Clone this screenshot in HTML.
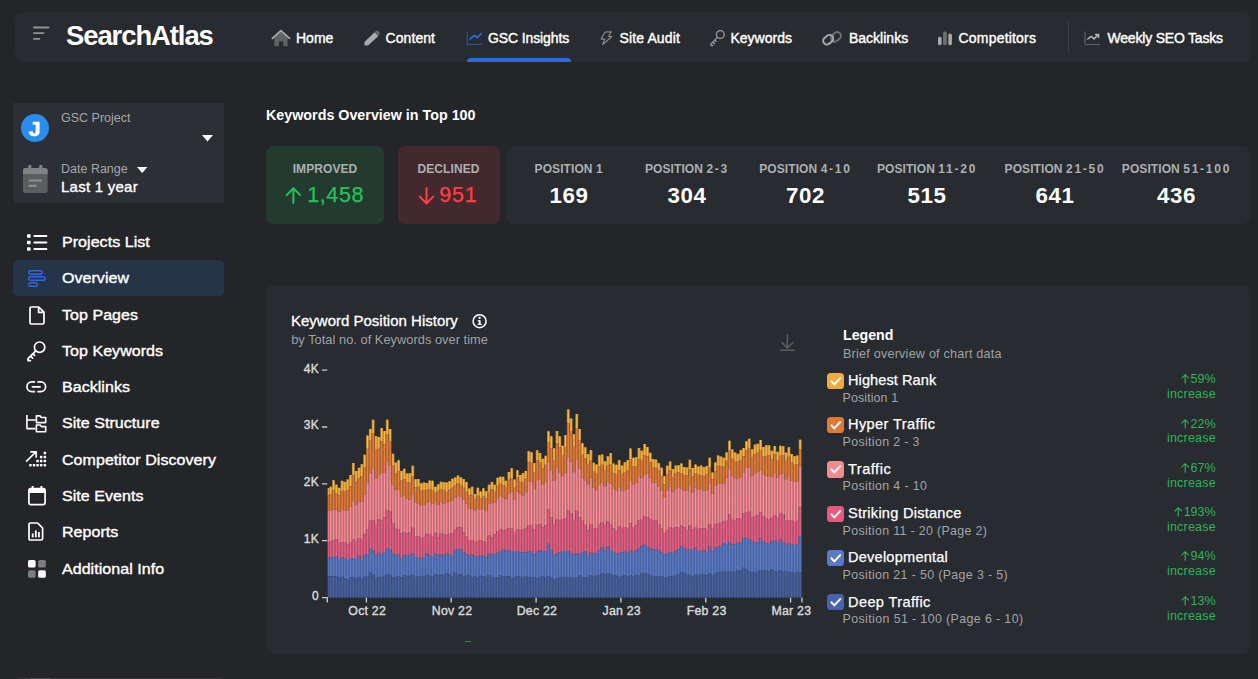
<!DOCTYPE html>
<html>
<head>
<meta charset="utf-8">
<title>SearchAtlas</title>
<style>
*{box-sizing:border-box;margin:0;padding:0}
html,body{width:1258px;height:679px;overflow:hidden;background:#242528;font-family:"Liberation Sans",sans-serif;color:#fff}
.abs{position:absolute}
.t{position:absolute;white-space:nowrap;line-height:1}
#nav{position:absolute;left:15px;top:12px;width:1236px;height:50px;background:#282b2f;border-radius:8px}
.ni{font-size:14px;color:#fff;-webkit-text-stroke:0.4px #fff;top:31.4px}
.logo{font-size:27.4px;font-weight:bold;color:#fff;left:66px;top:21.5px;letter-spacing:-1.05px}
svg{position:absolute;overflow:visible}
.mi{letter-spacing:0.05px;font-size:16px;color:#fff;-webkit-text-stroke:0.4px #fff;left:62px;transform:scaleY(0.93);transform-origin:0 84.6%}
.lab{letter-spacing:0.08px;font-size:12px;font-weight:bold;color:#adb0b2;text-align:center;transform:translateX(-50%)}
.val{font-size:22.3px;font-weight:bold;color:#fff;text-align:center;transform:translateX(-50%);letter-spacing:0.6px}
.ln{left:848px;font-size:14.6px;color:#fff;-webkit-text-stroke:0.25px #fff}
.ls{left:842.6px;font-size:12.4px;color:#a3a5a8}
.lp{right:42.4px;font-size:12.5px;color:#2fb457;text-align:right}
.lp.inc{letter-spacing:0.2px;right:42.2px}
.ax{font-size:12.3px;letter-spacing:0.25px;color:#d8d9da;-webkit-text-stroke:0.4px #d8d9da}
</style>
</head>
<body>
<!-- NAVBAR -->
<div id="nav"></div>
<svg style="left:33px;top:26px" width="17" height="14" viewBox="0 0 17 14"><g stroke="#8f9193" stroke-width="1.8" stroke-linecap="round"><path d="M0.9 1.5H15.5M0.9 7.1H10.6M0.9 12.8H6.4"/></g></svg>
<div class="t logo">SearchAtlas</div>

<div class="t ni" style="left:296px">Home</div>
<div class="t ni" style="left:385.5px;letter-spacing:0.08px">Content</div>
<div class="t ni" style="left:488px;letter-spacing:-0.12px">GSC Insights</div>
<div class="t ni" style="left:619.5px;letter-spacing:0.13px">Site Audit</div>
<div class="t ni" style="left:730.5px">Keywords</div>
<div class="t ni" style="left:849px">Backlinks</div>
<div class="t ni" style="left:958.5px;letter-spacing:0.2px">Competitors</div>
<div class="t ni" style="left:1107.5px;letter-spacing:-0.2px">Weekly SEO Tasks</div>
<div class="abs" style="left:467px;top:58px;width:103.5px;height:4px;background:#2d6bdc;border-radius:4px 4px 0 0"></div>
<div class="abs" style="left:1067.5px;top:22px;width:1px;height:30px;background:#3b3e43"></div>


<!-- nav icons -->
<svg style="left:271px;top:29px" width="20" height="18" viewBox="271 29 20 18"><path d="M274.2 37.2L280.9 31.2L287.6 37.2V46.3H283.2V41.5H279.1V46.3H274.2Z" fill="#5f6163"/><path d="M272.4 38.4L280.9 30.7L289.6 38.4" fill="none" stroke="#a9abad" stroke-width="1.7" stroke-linecap="round" stroke-linejoin="round"/></svg>
<svg style="left:362px;top:29px" width="20" height="18" viewBox="362 29 20 18"><path d="M364 45.8L364.9 41.6L374.6 32.2L378.4 35.9L368.4 45.2Z" fill="#a8aaac"/><path d="M374.9 31.9L376 30.9Q377 30.1 378 31L379.4 32.4Q380.2 33.4 379.4 34.4L378.6 35.4Z" fill="#6a6c6e"/><path d="M364 45.8L364.4 44L365.9 45.4Z" fill="#3a3c3e"/></svg>
<svg style="left:466px;top:30px" width="18" height="16" viewBox="466 30 18 16"><path d="M467.3 31.6V44.4H482.2" fill="none" stroke="#2a4f9a" stroke-width="1.3"/><path d="M470.2 39L474.6 35.2L476.9 37.8L481.2 33.6" fill="none" stroke="#2d6bdc" stroke-width="1.7" stroke-linejoin="round" stroke-linecap="round"/></svg>
<svg style="left:599px;top:30px" width="15" height="16" viewBox="599 30 15 16"><path d="M605 32.1L611.3 31.7L608.6 36.5H611.9L602.7 44.5L604.8 39.1H601.2Z" fill="none" stroke="#8b8d8f" stroke-width="1.1" stroke-linejoin="round"/></svg>
<svg style="left:708px;top:29px" width="18" height="18" viewBox="708 29 18 18"><g fill="none" stroke="#9b9d9f" stroke-width="1.3" stroke-linecap="round" stroke-linejoin="round"><circle cx="720.3" cy="34.5" r="3.9"/><path d="M717.5 37.4L711 43.9V45.5H712.8M713 42.2L714.5 43.7M715 40.2L716.2 41.4"/></g></svg>
<svg style="left:821px;top:29px" width="22" height="18" viewBox="821 29 22 18"><g fill="none" stroke-width="2"><rect x="830.5" y="33.2" width="10.8" height="7.4" rx="3.7" transform="rotate(-40 835.9 36.9)" stroke="#6e7072"/><rect x="822.8" y="36" width="10.8" height="7.4" rx="3.7" transform="rotate(-40 828.2 39.7)" stroke="#a8aaac"/></g></svg>
<svg style="left:937px;top:30px" width="16" height="16" viewBox="937 30 16 16"><rect x="938" y="36.8" width="3.6" height="8.4" rx="1.6" fill="#a8aaac"/><rect x="943.1" y="31.5" width="3.7" height="13.7" rx="1.6" fill="#6e7072"/><rect x="948.3" y="33.5" width="3.6" height="11.7" rx="1.6" fill="#a8aaac"/></svg>
<svg style="left:1084px;top:30px" width="18" height="16" viewBox="1084 30 18 16"><path d="M1085 31.6V43.2Q1085 44.5 1086.3 44.5H1100" fill="none" stroke="#5f6163" stroke-width="1.2"/><path d="M1087.8 39L1091.2 36.3L1094 38.9L1098.2 34.8M1095.6 34.5H1098.6V37.5" fill="none" stroke="#b5b7b9" stroke-width="1.5" stroke-linejoin="round" stroke-linecap="round"/></svg>

<!-- SIDEBAR -->
<div class="abs" style="left:13px;top:103px;width:211px;height:100px;background:#2c2f33"></div>
<div class="abs" style="left:13px;top:260px;width:211px;height:36px;background:#253449;border-radius:5px"></div>

<div class="t mi" style="top:234.3px">Projects List</div>
<div class="t mi" style="top:270.3px">Overview</div>
<div class="t mi" style="top:307.3px">Top Pages</div>
<div class="t mi" style="top:343.3px">Top Keywords</div>
<div class="t mi" style="top:379.3px">Backlinks</div>
<div class="t mi" style="top:415.3px">Site Structure</div>
<div class="t mi" style="top:452.3px">Competitor Discovery</div>
<div class="t mi" style="top:488.3px">Site Events</div>
<div class="t mi" style="top:524.3px">Reports</div>
<div class="t mi" style="top:561.3px">Additional Info</div>


<!-- project card contents -->
<div class="abs" style="left:20.8px;top:113.7px;width:28.6px;height:28.6px;border-radius:50%;background:#2a8cec"></div>
<div class="t" style="left:28.8px;top:117.8px;font-size:21px;font-weight:bold;color:#fff;-webkit-text-stroke:0.7px #fff">J</div>
<div class="t" style="left:61px;top:111.9px;font-size:12.5px;color:#a6a8aa">GSC Project</div>
<svg style="left:202px;top:135px" width="11" height="6.4" viewBox="0 0 11 6.4"><path d="M0 0H11L5.5 6.4Z" fill="#fff"/></svg>
<svg style="left:23px;top:164.5px" width="24.6" height="28" viewBox="0 0 24.6 28">
<rect x="0" y="3" width="24.6" height="25" rx="2.6" fill="#5b5d5f"/>
<path d="M0 9V5.6Q0 3 2.6 3H22Q24.6 3 24.6 5.6V9Z" fill="#808284"/>
<rect x="5.2" y="0" width="3.2" height="5" rx="1" fill="#808284"/><rect x="16.2" y="0" width="3.2" height="5" rx="1" fill="#808284"/>
<rect x="5.5" y="14.4" width="13.6" height="2.2" rx="1" fill="#8b8d8f"/><rect x="5.5" y="19.8" width="8.2" height="2.2" rx="1" fill="#8b8d8f"/>
</svg>
<div class="t" style="left:61px;top:163.2px;font-size:12.5px;color:#a6a8aa;letter-spacing:0px">Date Range</div>
<svg style="left:136.8px;top:167px" width="10.4" height="5.9" viewBox="0 0 10.4 5.9"><path d="M0 0H10.4L5.2 5.9Z" fill="#fff"/></svg>
<div class="t" style="left:61px;top:178.8px;font-size:15px;color:#fff;-webkit-text-stroke:0.35px #fff;letter-spacing:0.25px">Last 1 year</div>

<!-- sidebar icons -->
<!-- projects list -->
<svg style="left:26.5px;top:233.5px" width="20.5" height="17" viewBox="0 0 20.5 17"><g fill="#fff"><rect x="0" y="0.3" width="3.6" height="3.4" rx="0.7"/><rect x="0" y="6.8" width="3.6" height="3.4" rx="0.7"/><rect x="0" y="13.3" width="3.6" height="3.4" rx="0.7"/><rect x="6.4" y="1" width="14" height="2" rx="1"/><rect x="6.4" y="7.5" width="14" height="2" rx="1"/><rect x="6.4" y="14" width="14" height="2" rx="1"/></g></svg>
<!-- overview -->
<svg style="left:27.5px;top:269.5px" width="18" height="17" viewBox="0 0 18 17"><g fill="none" stroke="#2d6bdc" stroke-width="1.4"><rect x="0.7" y="0.7" width="13.4" height="3.6" rx="1.8"/><rect x="0.7" y="6.7" width="16.4" height="3.6" rx="1.8"/><rect x="0.7" y="12.7" width="8.6" height="3.6" rx="1.8"/></g></svg>
<!-- top pages -->
<svg style="left:28.5px;top:305.5px" width="16" height="19" viewBox="0 0 16 19"><path d="M2.6 1H9.8L15 6.2V16.4Q15 18 13.4 18H2.6Q1 18 1 16.4V2.6Q1 1 2.6 1ZM9.6 1.2V6.4H14.8" fill="none" stroke="#fff" stroke-width="1.7" stroke-linejoin="round"/></svg>
<!-- top keywords key -->
<svg style="left:27px;top:340.5px" width="19" height="20.5" viewBox="0 0 19 20.5"><g fill="none" stroke="#fff" stroke-width="1.7" stroke-linecap="round" stroke-linejoin="round"><circle cx="12.6" cy="6.2" r="5.2"/><path d="M8.8 9.8L1 17.6V19.6H3.4M3.6 15.2L5.6 17.2M6 12.8L7.6 14.4"/></g></svg>
<!-- backlinks -->
<svg style="left:26px;top:381px" width="20.5" height="11.6" viewBox="0 0 20.5 11.6"><g fill="none" stroke="#fff" stroke-width="1.7" stroke-linecap="round"><path d="M8.4 0.9H5.8A4.9 4.9 0 0 0 5.8 10.7H8.4M12.1 0.9H14.7A4.9 4.9 0 0 1 14.7 10.7H12.1M6.4 5.8H14.1"/></g></svg>
<!-- site structure -->
<svg style="left:26px;top:414.5px" width="20.5" height="17.5" viewBox="0 0 20.5 17.5"><g fill="none" stroke="#fff" stroke-width="1.6" stroke-linejoin="round"><path d="M0.9 0V13.6H9.6M0.9 5H9.6"/><path d="M10.4 0.9H14.2L15.4 2.5H19.7V7.6H10.4Z"/><path d="M10.4 10H14.2L15.4 11.6H19.7V16.7H10.4Z"/></g></svg>
<!-- competitor discovery -->
<svg style="left:26px;top:451px" width="20.5" height="17.5" viewBox="0 0 20.5 17.5"><g fill="none" stroke="#fff" stroke-width="1.7" stroke-linecap="round" stroke-linejoin="round"><path d="M0.6 10.2L9.8 1M5 0.8H10.2V6"/></g><g fill="#fff"><rect x="17.6" y="0.8" width="2.5" height="2.5" rx="0.6"/><rect x="13.9" y="4.8" width="2.5" height="2.5" rx="0.6"/><rect x="17.6" y="4.8" width="2.5" height="2.5" rx="0.6"/><rect x="10.3" y="8.8" width="2.5" height="2.5" rx="0.6"/><rect x="13.9" y="8.8" width="2.5" height="2.5" rx="0.6"/><rect x="17.6" y="8.8" width="2.5" height="2.5" rx="0.6"/><rect x="3.2" y="12.9" width="2.5" height="2.5" rx="0.6"/><rect x="6.8" y="12.9" width="2.5" height="2.5" rx="0.6"/><rect x="10.3" y="12.9" width="2.5" height="2.5" rx="0.6"/><rect x="13.9" y="12.9" width="2.5" height="2.5" rx="0.6"/><rect x="17.6" y="12.9" width="2.5" height="2.5" rx="0.6"/></g></svg>
<!-- site events -->
<svg style="left:27.5px;top:486px" width="18" height="19.5" viewBox="0 0 18 19.5"><g fill="none" stroke="#fff" stroke-width="1.7" stroke-linejoin="round"><rect x="0.9" y="2.6" width="16.2" height="16" rx="2"/></g><rect x="0.9" y="2.6" width="16.2" height="4.4" fill="#fff"/><rect x="3.6" y="0" width="2" height="4" fill="#fff"/><rect x="12.4" y="0" width="2" height="4" fill="#fff"/></svg>
<!-- reports -->
<svg style="left:28.1px;top:522px" width="15.5" height="19" viewBox="0 0 15.5 19"><path d="M2.6 1H9.6L14.6 6V16.4Q14.6 18 13 18H2.6Q1 18 1 16.4V2.6Q1 1 2.6 1Z" fill="none" stroke="#fff" stroke-width="1.7" stroke-linejoin="round"/><g fill="#fff"><rect x="3.8" y="11.4" width="1.8" height="4"/><rect x="6.9" y="8.4" width="1.8" height="7"/><rect x="10" y="10" width="1.8" height="5.4"/></g></svg>
<!-- additional info -->
<svg style="left:27.5px;top:559.5px" width="18" height="18" viewBox="0 0 18 18"><rect x="0" y="0" width="7.6" height="7.6" rx="1.6" fill="#fff"/><rect x="10.2" y="0" width="7.6" height="7.6" rx="1.6" fill="#7b7d7f"/><rect x="0" y="10.2" width="7.6" height="7.6" rx="1.6" fill="#7b7d7f"/><rect x="10.2" y="10.2" width="7.6" height="7.6" rx="1.6" fill="#fff"/></svg>

<div class="abs" style="left:18px;top:678px;width:204px;height:1px;background:#37333b"></div><div class="abs" style="left:31px;top:678px;width:20px;height:1px;background:#4b474f"></div>
<!-- MAIN -->
<div class="t" style="left:266px;top:107.6px;font-size:14.3px;font-weight:bold;color:#fff">Keywords Overview in Top 100</div>

<div class="abs" style="left:266px;top:146px;width:118px;height:78px;background:#233a2e;border-radius:7px"></div>
<div class="abs" style="left:398.3px;top:146px;width:101.7px;height:78px;background:#43292d;border-radius:7px"></div>
<div class="abs" style="left:506px;top:146px;width:745px;height:78px;background:#282b2f;border-radius:9px"></div>

<div class="t lab" style="left:325px;top:162.9px">IMPROVED</div>
<div class="t lab" style="left:448.5px;top:162.9px">DECLINED</div>
<div class="t lab" style="left:569px;top:162.9px">POSITION <span style="letter-spacing:0.7px">1</span></div>
<div class="t lab" style="left:687px;top:162.9px">POSITION <span style="letter-spacing:1.75px">2-3</span></div>
<div class="t lab" style="left:805.5px;top:162.9px">POSITION <span style="letter-spacing:1.75px">4-10</span></div>
<div class="t lab" style="left:927px;top:162.9px">POSITION <span style="letter-spacing:1.75px">11-20</span></div>
<div class="t lab" style="left:1055px;top:162.9px">POSITION <span style="letter-spacing:1.75px">21-50</span></div>
<div class="t lab" style="left:1176.5px;top:162.9px">POSITION <span style="letter-spacing:1.75px">51-100</span></div>

<div class="t val" style="left:569px;top:184.9px">169</div>
<div class="t val" style="left:687px;top:184.9px">304</div>
<div class="t val" style="left:805.5px;top:184.9px">702</div>
<div class="t val" style="left:927px;top:184.9px">515</div>
<div class="t val" style="left:1055px;top:184.9px">641</div>
<div class="t val" style="left:1176.5px;top:184.9px">436</div>

<div class="t" style="left:307.2px;top:184.6px;font-size:21.5px;color:#22c35d;letter-spacing:0.6px;-webkit-text-stroke:0.25px #22c35d">1,458</div>
<svg style="left:285px;top:186px" width="17" height="19" viewBox="285 186 17 19"><path d="M293.4 203V188.4M286.6 195.1L293.4 188.2L300.2 195.1" fill="none" stroke="#22c35d" stroke-width="2" stroke-linecap="round" stroke-linejoin="round"/></svg>
<div class="t" style="left:439.3px;top:184.6px;font-size:21.5px;color:#ff4044;letter-spacing:0.8px;-webkit-text-stroke:0.25px #ff4044">951</div>
<svg style="left:418px;top:186px" width="17" height="19" viewBox="418 186 17 19"><path d="M426.5 188V203.2M419.8 196.6L426.5 203.5L433.2 196.6" fill="none" stroke="#ff4044" stroke-width="2" stroke-linecap="round" stroke-linejoin="round"/></svg>

<!-- CHART PANEL -->
<div class="abs" style="left:266px;top:285px;width:984px;height:368.5px;background:#282b2f;border-radius:8px"></div>
<div class="t" style="left:291px;top:313.3px;font-size:15px;color:#fff;-webkit-text-stroke:0.3px #fff">Keyword Position History</div>
<div class="t" style="left:291.2px;top:334.1px;font-size:12.8px;color:#a0a2a5;letter-spacing:0.04px">by Total no. of Keywords over time</div>
<div class="t" style="left:843px;top:327.6px;font-size:14.2px;font-weight:bold;color:#fff">Legend</div>
<div class="t" style="left:843px;top:347.7px;font-size:12.6px;color:#a0a2a5;letter-spacing:0.22px">Brief overview of chart data</div>
<div class="t ax" style="right:939px;font-size:12px;top:362.5px">4K</div>
<div class="t ax" style="right:939px;font-size:12px;top:419.3px">3K</div>
<div class="t ax" style="right:939px;font-size:12px;top:476.2px">2K</div>
<div class="t ax" style="right:939px;font-size:12px;top:533px">1K</div>
<div class="t ax" style="right:939px;font-size:12px;top:589.9px">0</div>
<svg style="left:0;top:0" width="1258" height="679" viewBox="0 0 1258 679"><g stroke="#cfd0d1" stroke-width="1.3" fill="none"><path d="M322 370.2H327.2M322 427H327.2M322 483.9H327.2M322 540.7H327.2M322 597.6H327.3V602.4M366.4 597.5V602.4M451.2 597.5V602.4M536.1 597.5V602.4M620.9 597.5V602.4M705.8 597.5V602.4M790.6 597.5V602.4M801.9 597.5V602.4"/></g>
<g id="bars"><path d="M327.80 487.97H329.31V495.14H327.80ZM329.31 486.82H332.14V494.47H329.31ZM332.14 480.31H334.97V490.36H332.14ZM334.97 484.81H337.80V493.52H334.97ZM337.80 487.78H340.63V495.14H337.80ZM340.63 480.79H343.45V490.84H340.63ZM343.45 481.75H346.28V491.03H343.45ZM346.28 479.55H349.11V490.36H346.28ZM349.11 475.05H351.94V486.24H349.11ZM351.94 462.89H354.77V475.33H351.94ZM354.77 470.93H357.59V481.75H354.77ZM357.59 467.68H360.42V478.40H357.59ZM360.42 464.14H363.25V476.29H360.42ZM363.25 454.76H366.08V467.39H363.25ZM366.08 435.43H368.91V448.83H366.08ZM368.91 428.92H371.73V440.41H368.91ZM371.73 419.83H374.56V433.23H371.73ZM374.56 436.10H377.39V449.02H374.56ZM377.39 437.06H380.22V448.83H377.39ZM380.22 427.97H383.05V441.36H380.22ZM383.05 431.03H385.87V444.43H383.05ZM385.87 419.83H388.70V433.90H385.87ZM388.70 428.92H391.53V441.36H388.70ZM391.53 453.80H394.36V465.48H391.53ZM394.36 462.42H397.19V473.13H394.36ZM397.19 460.31H400.01V471.22H397.19ZM400.01 470.93H402.84V480.12H400.01ZM402.84 468.64H405.67V479.35H402.84ZM405.67 473.61H408.50V482.42H405.67ZM408.50 473.33H411.33V482.70H408.50ZM411.33 465.77H414.15V476.48H411.33ZM414.15 479.35H416.98V487.49H414.15ZM416.98 479.07H419.81V486.82H416.98ZM419.81 483.18H422.64V490.65H419.81ZM422.64 482.42H425.47V490.36H422.64ZM425.47 482.89H428.29V489.69H425.47ZM428.29 480.50H431.12V488.92H428.29ZM431.12 480.79H433.95V489.88H431.12ZM433.95 486.82H436.78V492.75H433.95ZM436.78 484.14H439.61V491.60H436.78ZM439.61 481.75H442.43V488.92H439.61ZM442.43 482.22H445.26V490.36H442.43ZM445.26 482.58H448.09V492.15H445.26ZM448.09 481.34H450.92V489.76H448.09ZM450.92 478.76H453.75V487.85H450.92ZM453.75 477.51H456.57V485.74H453.75ZM456.57 475.60H459.40V483.54H456.57ZM459.40 477.13H462.23V484.98H459.40ZM462.23 479.04H465.06V487.85H462.23ZM465.06 482.11H467.89V491.67H465.06ZM467.89 488.61H470.71V495.50H467.89ZM470.71 486.70H473.54V494.74H470.71ZM473.54 494.07H476.37V499.33H473.54ZM476.37 487.85H479.20V495.69H476.37ZM479.20 491.48H482.03V498.37H479.20ZM482.03 488.33H484.85V496.46H482.03ZM484.85 491.20H487.68V498.56H484.85ZM487.68 484.78H490.51V492.44H487.68ZM490.51 481.91H493.34V489.28H490.51ZM493.34 484.78H496.17V491.87H493.34ZM496.17 477.80H498.99V485.74H496.17ZM498.99 476.84H501.82V483.83H498.99ZM501.82 476.84H504.65V485.17H501.82ZM504.65 480.67H507.48V486.89H504.65ZM507.48 472.06H510.31V479.71H507.48ZM510.31 468.23H513.13V478.47H510.31ZM513.13 479.43H515.96V487.66H513.13ZM515.96 470.14H518.79V477.51H515.96ZM518.79 474.93H521.62V481.63H518.79ZM521.62 473.01H524.45V482.11H521.62ZM524.45 471.10H527.27V478.76H524.45ZM527.27 451.29H530.10V461.82H527.27ZM530.10 452.25H532.93V462.78H530.10ZM532.93 462.97H535.76V472.06H532.93ZM535.76 450.33H538.59V460.29H535.76ZM538.59 452.92H541.41V462.49H538.59ZM541.41 458.66H544.24V468.23H541.41ZM544.24 455.79H547.07V464.69H544.24ZM547.07 431.17H549.90V442.39H547.07ZM549.90 436.34H552.73V448.13H549.90ZM552.73 448.13H555.55V460.10H552.73ZM555.55 430.89H558.38V443.35H555.55ZM558.38 436.15H561.21V447.18H558.38ZM561.21 445.74H564.04V455.79H561.21ZM564.04 435.00H566.87V447.44H564.04ZM566.87 409.55H569.69V423.23H566.87ZM569.69 418.44H572.52V431.56H569.69ZM572.52 434.23H575.35V446.67H572.52ZM575.35 413.95H578.18V428.01H575.35ZM578.18 428.97H581.01V440.17H578.18ZM581.01 443.33H583.83V454.81H581.01ZM583.83 447.15H586.66V457.97H583.83ZM586.66 454.14H589.49V464.47H586.66ZM589.49 450.02H592.32V460.65H589.49ZM592.32 462.75H595.15V471.84H592.32ZM595.15 464.47H597.97V473.76H595.15ZM597.97 455.29H600.80V466.10H597.97ZM600.80 454.62H603.63V464.67H600.80ZM603.63 461.32H606.46V470.60H603.63ZM606.46 456.24H609.29V465.43H606.46ZM609.29 452.89H612.11V464.47H609.29ZM612.11 463.52H614.94V473.28H612.11ZM614.94 464.67H617.77V474.04H614.94ZM617.77 460.36H620.60V469.93H617.77ZM620.60 465.62H623.43V474.43H620.60ZM623.43 462.27H626.25V472.80H623.43ZM626.25 459.88H629.08V470.60H626.25ZM629.08 448.59H631.91V459.40H629.08ZM631.91 457.78H634.74V466.58H631.91ZM634.74 457.20H637.57V466.39H634.74ZM637.57 447.92H640.39V458.73H637.57ZM640.39 450.79H643.22V460.07H640.39ZM643.22 444.09H646.05V455.10H643.22ZM646.05 446.96H648.88V456.24H646.05ZM648.88 452.70H651.71V461.99H648.88ZM651.71 459.11H654.53V467.54H651.71ZM654.53 459.40H657.36V467.73H654.53ZM657.36 463.23H660.19V470.41H657.36ZM660.19 467.73H663.02V476.34H660.19ZM663.02 476.15H665.85V484.57H663.02ZM665.85 465.81H668.67V474.23H665.85ZM668.67 461.60H671.50V470.41H668.67ZM671.50 468.97H674.33V477.11H671.50ZM674.33 465.43H677.16V473.47H674.33ZM677.16 465.14H679.99V472.32H677.16ZM679.99 463.52H682.81V473.09H679.99ZM682.81 467.06H685.64V475.19H682.81ZM685.64 467.54H688.47V475.19H685.64ZM688.47 459.69H691.30V468.97H688.47ZM691.30 468.01H694.13V476.34H691.30ZM694.13 464.47H696.95V473.28H694.13ZM696.95 466.58H699.78V474.71H696.95ZM699.78 465.43H702.61V475.00H699.78ZM702.61 467.06H705.44V476.15H702.61ZM705.44 466.10H708.27V474.43H705.44ZM708.27 457.78H711.09V467.54H708.27ZM711.09 472.51H713.92V479.21H711.09ZM713.92 462.56H716.75V471.17H713.92ZM716.75 455.57H719.58V465.81H716.75ZM719.58 456.53H722.41V466.39H719.58ZM722.41 457.78H725.23V466.58H722.41ZM725.23 452.22H728.06V460.65H725.23ZM728.06 440.74H730.89V450.12H728.06ZM730.89 449.55H733.72V458.73H730.89ZM733.72 452.42H736.55V461.79H733.72ZM736.55 453.66H739.37V461.79H736.55ZM739.37 450.12H742.20V460.07H739.37ZM742.20 447.92H745.03V456.24H742.20ZM745.03 441.22H747.86V450.31H745.03ZM747.86 438.83H750.69V448.21H747.86ZM750.69 449.35H753.51V457.20H750.69ZM753.51 444.57H756.34V453.95H753.51ZM756.34 443.80H759.17V452.70H756.34ZM759.17 439.98H762.00V450.12H759.17ZM762.00 446.96H764.83V456.82H762.00ZM764.83 445.33H767.65V456.05H764.83ZM767.65 445.33H770.48V455.29H767.65ZM770.48 450.79H773.31V459.40H770.48ZM773.31 446.00H776.14V454.33H773.31ZM776.14 451.75H778.97V460.07H776.14ZM778.97 445.72H781.79V455.86H778.97ZM781.79 446.29H784.62V455.57H781.79ZM784.62 452.42H787.45V460.65H784.62ZM787.45 447.25H790.28V456.82H787.45ZM790.28 453.95H793.11V462.56H790.28ZM793.11 456.24H795.93V464.67H793.11ZM795.93 455.57H798.76V464.19H795.93ZM798.76 439.78H801.59V449.55H798.76Z" fill="#bf8b3b"/><path d="M327.80 495.14H329.31V510.93H327.80ZM329.31 494.47H332.14V510.74H329.31ZM332.14 490.36H334.97V509.78H332.14ZM334.97 493.52H337.80V509.78H334.97ZM337.80 495.14H340.63V511.89H337.80ZM340.63 490.84H343.45V509.98H340.63ZM343.45 491.03H346.28V510.74H343.45ZM346.28 490.36H349.11V510.93H346.28ZM349.11 486.24H351.94V506.63H349.11ZM351.94 475.33H354.77V501.36H351.94ZM354.77 481.75H357.59V505.19H354.77ZM357.59 478.40H360.42V501.84H357.59ZM360.42 476.29H363.25V501.84H360.42ZM363.25 467.39H366.08V494.67H363.25ZM366.08 448.83H368.91V482.70H366.08ZM368.91 440.41H371.73V473.42H368.91ZM371.73 433.23H374.56V468.35H371.73ZM374.56 449.02H377.39V478.40H374.56ZM377.39 448.83H380.22V475.33H377.39ZM380.22 441.36H383.05V473.13H380.22ZM383.05 444.43H385.87V472.46H383.05ZM385.87 433.90H388.70V463.09H385.87ZM388.70 441.36H391.53V465.48H388.70ZM391.53 465.48H394.36V484.62H391.53ZM394.36 473.13H397.19V490.36H394.36ZM397.19 471.22H400.01V489.88H397.19ZM400.01 480.12H402.84V497.06H400.01ZM402.84 479.35H405.67V495.81H402.84ZM405.67 482.42H408.50V498.97H405.67ZM408.50 482.70H411.33V499.64H408.50ZM411.33 476.48H414.15V494.67H411.33ZM414.15 487.49H416.98V503.09H414.15ZM416.98 486.82H419.81V503.76H416.98ZM419.81 490.65H422.64V505.96H419.81ZM422.64 490.36H425.47V505.00H422.64ZM425.47 489.69H428.29V502.80H425.47ZM428.29 488.92H431.12V501.84H428.29ZM431.12 489.88H433.95V503.76H431.12ZM433.95 492.75H436.78V503.09H433.95ZM436.78 491.60H439.61V505.00H436.78ZM439.61 488.92H442.43V501.84H439.61ZM442.43 490.36H445.26V503.76H442.43ZM445.26 492.15H448.09V502.87H445.26ZM448.09 489.76H450.92V502.11H448.09ZM450.92 487.85H453.75V500.48H450.92ZM453.75 485.74H456.57V497.89H453.75ZM456.57 483.54H459.40V495.98H456.57ZM459.40 484.98H462.23V496.94H459.40ZM462.23 487.85H465.06V500.10H462.23ZM465.06 491.67H467.89V503.83H465.06ZM467.89 495.50H470.71V509.09H467.89ZM470.71 494.74H473.54V508.42H470.71ZM473.54 499.33H476.37V510.72H473.54ZM476.37 495.69H479.20V508.80H476.37ZM479.20 498.37H482.03V509.57H479.20ZM482.03 496.46H484.85V508.80H482.03ZM484.85 498.56H487.68V511.29H484.85ZM487.68 492.44H490.51V503.83H487.68ZM490.51 489.28H493.34V503.35H490.51ZM493.34 491.87H496.17V502.39H493.34ZM496.17 485.74H498.99V498.37H496.17ZM498.99 483.83H501.82V495.98H498.99ZM501.82 485.17H504.65V497.42H501.82ZM504.65 486.89H507.48V498.85H504.65ZM507.48 479.71H510.31V493.59H507.48ZM510.31 478.47H513.13V491.67H510.31ZM513.13 487.66H515.96V499.33H513.13ZM515.96 477.51H518.79V491.67H515.96ZM518.79 481.63H521.62V494.35H518.79ZM521.62 482.11H524.45V495.69H521.62ZM524.45 478.76H527.27V492.15H524.45ZM527.27 461.82H530.10V482.11H527.27ZM530.10 462.78H532.93V481.63H530.10ZM532.93 472.06H535.76V489.28H532.93ZM535.76 460.29H538.59V480.19H535.76ZM538.59 462.49H541.41V479.43H538.59ZM541.41 468.23H544.24V484.78H541.41ZM544.24 464.69H547.07V483.06H544.24ZM547.07 442.39H549.90V462.97H547.07ZM549.90 448.13H552.73V470.14H549.90ZM552.73 460.10H555.55V480.67H552.73ZM555.55 443.35H558.38V467.75H555.55ZM558.38 447.18H561.21V472.54H558.38ZM561.21 455.79H564.04V476.36H561.21ZM564.04 447.44H566.87V473.28H564.04ZM566.87 423.23H569.69V457.20H566.87ZM569.69 431.56H572.52V462.27H569.69ZM572.52 446.67H575.35V472.13H572.52ZM575.35 428.01H578.18V460.07H575.35ZM578.18 440.17H581.01V468.49H578.18ZM581.01 454.81H583.83V477.58H581.01ZM583.83 457.97H586.66V480.45H583.83ZM586.66 464.47H589.49V484.57H586.66ZM589.49 460.65H592.32V479.02H589.49ZM592.32 471.84H595.15V487.44H592.32ZM595.15 473.76H597.97V490.98H595.15ZM597.97 466.10H600.80V484.28H597.97ZM600.80 464.67H603.63V482.37H600.80ZM603.63 470.60H606.46V486.20H603.63ZM606.46 465.43H609.29V481.89H606.46ZM609.29 464.47H612.11V483.80H609.29ZM612.11 473.28H614.94V489.07H612.11ZM614.94 474.04H617.77V490.98H614.94ZM617.77 469.93H620.60V486.67H617.77ZM620.60 474.43H623.43V490.50H620.60ZM623.43 472.80H626.25V490.98H623.43ZM626.25 470.60H629.08V488.78H626.25ZM629.08 459.40H631.91V480.17H629.08ZM631.91 466.58H634.74V484.76H631.91ZM634.74 466.39H637.57V483.04H634.74ZM637.57 458.73H640.39V476.34H637.57ZM640.39 460.07H643.22V478.25H640.39ZM643.22 455.10H646.05V474.43H643.22ZM646.05 456.24H648.88V473.47H646.05ZM648.88 461.99H651.71V478.06H648.88ZM651.71 467.54H654.53V482.66H651.71ZM654.53 467.73H657.36V482.66H654.53ZM657.36 470.41H660.19V486.67H657.36ZM660.19 476.34H663.02V490.69H660.19ZM663.02 484.57H665.85V497.97H663.02ZM665.85 474.23H668.67V490.69H665.85ZM668.67 470.41H671.50V486.48H668.67ZM671.50 477.11H674.33V492.22H671.50ZM674.33 473.47H677.16V488.78H674.33ZM677.16 472.32H679.99V487.15H677.16ZM679.99 473.09H682.81V488.78H679.99ZM682.81 475.19H685.64V490.69H682.81ZM685.64 475.19H688.47V490.69H685.64ZM688.47 468.97H691.30V485.91H688.47ZM691.30 476.34H694.13V492.42H691.30ZM694.13 473.28H696.95V487.82H694.13ZM696.95 474.71H699.78V489.74H696.95ZM699.78 475.00H702.61V489.07H699.78ZM702.61 476.15H705.44V490.69H702.61ZM705.44 474.43H708.27V490.31H705.44ZM708.27 467.54H711.09V483.33H708.27ZM711.09 479.21H713.92V493.56H711.09ZM713.92 471.17H716.75V485.53H713.92ZM716.75 465.81H719.58V483.61H716.75ZM719.58 466.39H722.41V483.80H719.58ZM722.41 466.58H725.23V483.80H722.41ZM725.23 460.65H728.06V477.87H725.23ZM728.06 450.12H730.89V469.93H728.06ZM730.89 458.73H733.72V476.15H730.89ZM733.72 461.79H736.55V478.54H733.72ZM736.55 461.79H739.37V478.54H736.55ZM739.37 460.07H742.20V478.06H739.37ZM742.20 456.24H745.03V472.80H742.20ZM745.03 450.31H747.86V468.01H745.03ZM747.86 448.21H750.69V467.54H747.86ZM750.69 457.20H753.51V476.15H750.69ZM753.51 453.95H756.34V473.28H753.51ZM756.34 452.70H759.17V471.84H756.34ZM759.17 450.12H762.00V470.22H759.17ZM762.00 456.82H764.83V474.71H762.00ZM764.83 456.05H767.65V475.67H764.83ZM767.65 455.29H770.48V476.91H767.65ZM770.48 459.40H773.31V476.91H770.48ZM773.31 454.33H776.14V473.28H773.31ZM776.14 460.07H778.97V477.58H776.14ZM778.97 455.86H781.79V474.43H778.97ZM781.79 455.57H784.62V473.47H781.79ZM784.62 460.65H787.45V479.21H784.62ZM787.45 456.82H790.28V476.15H787.45ZM790.28 462.56H793.11V480.74H790.28ZM793.11 464.67H795.93V481.70H793.11ZM795.93 464.19H798.76V481.41H795.93ZM798.76 449.55H801.59V466.77H798.76Z" fill="#aa6536"/><path d="M327.80 510.93H329.31V542.70H327.80ZM329.31 510.74H332.14V541.46H329.31ZM332.14 509.78H334.97V540.12H332.14ZM334.97 509.78H337.80V539.35H334.97ZM337.80 511.89H340.63V542.70H337.80ZM340.63 509.98H343.45V542.03H340.63ZM343.45 510.74H346.28V542.22H343.45ZM346.28 510.93H349.11V544.62H346.28ZM349.11 506.63H351.94V542.70H349.11ZM351.94 501.36H354.77V538.88H351.94ZM354.77 505.19H357.59V541.08H354.77ZM357.59 501.84H360.42V538.21H357.59ZM360.42 501.84H363.25V539.83H360.42ZM363.25 494.67H366.08V533.80H363.25ZM366.08 482.70H368.91V529.02H366.08ZM368.91 473.42H371.73V520.02H368.91ZM371.73 468.35H374.56V520.02H371.73ZM374.56 478.40H377.39V524.81H374.56ZM377.39 475.33H380.22V519.55H377.39ZM380.22 473.13H383.05V520.50H380.22ZM383.05 472.46H385.87V517.44H383.05ZM385.87 463.09H388.70V510.17H385.87ZM388.70 465.48H391.53V511.41H388.70ZM391.53 484.62H394.36V522.89H391.53ZM394.36 490.36H397.19V528.64H394.36ZM397.19 489.88H400.01V529.02H397.19ZM400.01 497.06H402.84V533.13H400.01ZM402.84 495.81H405.67V531.89H402.84ZM405.67 498.97H408.50V533.13H405.67ZM408.50 499.64H411.33V532.18H408.50ZM411.33 494.67H414.15V527.87H411.33ZM414.15 503.09H416.98V536.00H414.15ZM416.98 503.76H419.81V536.29H416.98ZM419.81 505.96H422.64V538.59H419.81ZM422.64 505.00H425.47V536.96H422.64ZM425.47 502.80H428.29V533.80H425.47ZM428.29 501.84H431.12V534.09H428.29ZM431.12 503.76H433.95V536.00H431.12ZM433.95 503.09H436.78V532.66H433.95ZM436.78 505.00H439.61V537.25H436.78ZM439.61 501.84H442.43V533.42H439.61ZM442.43 503.76H445.26V534.57H442.43ZM445.26 502.87H448.09V534.45H445.26ZM448.09 502.11H450.92V533.68H448.09ZM450.92 500.48H453.75V533.01H450.92ZM453.75 497.89H456.57V529.86H453.75ZM456.57 495.98H459.40V527.27H456.57ZM459.40 496.94H462.23V527.27H459.40ZM462.23 500.10H465.06V532.54H462.23ZM465.06 503.83H467.89V535.89H465.06ZM467.89 509.09H470.71V540.19H467.89ZM470.71 508.42H473.54V540.00H470.71ZM473.54 510.72H476.37V542.58H473.54ZM476.37 508.80H479.20V540.96H476.37ZM479.20 509.57H482.03V540.19H479.20ZM482.03 508.80H484.85V541.15H482.03ZM484.85 511.29H487.68V542.11H484.85ZM487.68 503.83H490.51V535.60H487.68ZM490.51 503.35H493.34V537.13H490.51ZM493.34 502.39H496.17V534.26H493.34ZM496.17 498.37H498.99V531.10H496.17ZM498.99 495.98H501.82V529.19H498.99ZM501.82 497.42H504.65V530.14H501.82ZM504.65 498.85H507.48V529.86H504.65ZM507.48 493.59H510.31V528.23H507.48ZM510.31 491.67H513.13V527.94H510.31ZM513.13 499.33H515.96V532.06H513.13ZM515.96 491.67H518.79V528.90H515.96ZM518.79 494.35H521.62V529.86H518.79ZM521.62 495.69H524.45V529.67H521.62ZM524.45 492.15H527.27V528.52H524.45ZM527.27 482.11H530.10V525.07H527.27ZM530.10 481.63H532.93V525.65H530.10ZM532.93 489.28H535.76V529.19H532.93ZM535.76 480.19H538.59V524.69H535.76ZM538.59 479.43H541.41V523.92H538.59ZM541.41 484.78H544.24V527.27H541.41ZM544.24 483.06H547.07V525.07H544.24ZM547.07 462.97H549.90V509.57H547.07ZM549.90 470.14H552.73V517.42H549.90ZM552.73 480.67H555.55V524.11H552.73ZM555.55 467.75H558.38V519.62H555.55ZM558.38 472.54H561.21V520.57H558.38ZM561.21 476.36H564.04V519.62H561.21ZM564.04 473.28H566.87V517.97H564.04ZM566.87 457.20H569.69V510.50H566.87ZM569.69 462.27H572.52V513.37H569.69ZM572.52 472.13H575.35V518.92H572.52ZM575.35 460.07H578.18V510.79H575.35ZM578.18 468.49H581.01V517.20H578.18ZM581.01 477.58H583.83V520.65H581.01ZM583.83 480.45H586.66V524.67H583.83ZM586.66 484.57H589.49V530.60H586.66ZM589.49 479.02H592.32V524.47H589.49ZM592.32 487.44H595.15V528.01H592.32ZM595.15 490.98H597.97V528.49H595.15ZM597.97 484.28H600.80V524.86H597.97ZM600.80 482.37H603.63V522.75H600.80ZM603.63 486.20H606.46V525.43H603.63ZM606.46 481.89H609.29V521.60H606.46ZM609.29 483.80H612.11V524.86H609.29ZM612.11 489.07H614.94V528.49H612.11ZM614.94 490.98H617.77V529.93H614.94ZM617.77 486.67H620.60V526.10H617.77ZM620.60 490.50H623.43V528.01H620.60ZM623.43 490.98H626.25V527.54H623.43ZM626.25 488.78H629.08V528.01H626.25ZM629.08 480.17H631.91V523.52H629.08ZM631.91 484.76H634.74V527.06H631.91ZM634.74 483.04H637.57V525.14H634.74ZM637.57 476.34H640.39V520.07H637.57ZM640.39 478.25H643.22V519.69H640.39ZM643.22 474.43H646.05V516.53H643.22ZM646.05 473.47H648.88V517.20H646.05ZM648.88 478.06H651.71V518.92H648.88ZM651.71 482.66H654.53V520.84H651.71ZM654.53 482.66H657.36V520.07H654.53ZM657.36 486.67H660.19V524.47H657.36ZM660.19 490.69H663.02V528.01H660.19ZM663.02 497.97H665.85V533.47H663.02ZM665.85 490.69H668.67V529.93H665.85ZM668.67 486.48H671.50V527.54H668.67ZM671.50 492.22H674.33V528.49H671.50ZM674.33 488.78H677.16V527.34H674.33ZM677.16 487.15H679.99V527.06H677.16ZM679.99 488.78H682.81V525.43H679.99ZM682.81 490.69H685.64V527.54H682.81ZM685.64 490.69H688.47V529.93H685.64ZM688.47 485.91H691.30V525.62H688.47ZM691.30 492.42H694.13V529.45H691.30ZM694.13 487.82H696.95V527.06H694.13ZM696.95 489.74H699.78V528.68H696.95ZM699.78 489.07H702.61V528.49H699.78ZM702.61 490.69H705.44V528.30H702.61ZM705.44 490.31H708.27V529.64H705.44ZM708.27 483.33H711.09V523.90H708.27ZM711.09 493.56H713.92V528.68H711.09ZM713.92 485.53H716.75V524.19H713.92ZM716.75 483.61H719.58V523.71H716.75ZM719.58 483.80H722.41V522.75H719.58ZM722.41 483.80H725.23V521.03H722.41ZM725.23 477.87H728.06V520.84H725.23ZM728.06 469.93H730.89V514.33H728.06ZM730.89 476.15H733.72V519.69H730.89ZM733.72 478.54H736.55V520.07H733.72ZM736.55 478.54H739.37V517.97H736.55ZM739.37 478.06H742.20V518.73H739.37ZM742.20 472.80H745.03V513.18H742.20ZM745.03 468.01H747.86V512.03H745.03ZM747.86 467.54H750.69V511.75H747.86ZM750.69 476.15H753.51V517.01H750.69ZM753.51 473.28H756.34V516.82H753.51ZM756.34 471.84H759.17V515.29H756.34ZM759.17 470.22H762.00V512.42H759.17ZM762.00 474.71H764.83V516.24H762.00ZM764.83 475.67H767.65V518.44H764.83ZM767.65 476.91H770.48V519.69H767.65ZM770.48 476.91H773.31V517.78H770.48ZM773.31 473.28H776.14V514.90H773.31ZM776.14 477.58H778.97V517.78H776.14ZM778.97 474.43H781.79V513.37H778.97ZM781.79 473.47H784.62V513.95H781.79ZM784.62 479.21H787.45V520.65H784.62ZM787.45 476.15H790.28V520.07H787.45ZM790.28 480.74H793.11V520.84H790.28ZM793.11 481.70H795.93V521.79H793.11ZM795.93 481.41H798.76V520.65H795.93ZM798.76 466.77H801.59V507.25H798.76Z" fill="#bd6e76"/><path d="M327.80 542.70H329.31V558.01H327.80ZM329.31 541.46H332.14V557.34H329.31ZM332.14 540.12H334.97V556.77H332.14ZM334.97 539.35H337.80V556.10H334.97ZM337.80 542.70H340.63V558.97H337.80ZM340.63 542.03H343.45V557.54H340.63ZM343.45 542.22H346.28V558.01H343.45ZM346.28 544.62H349.11V560.60H346.28ZM349.11 542.70H351.94V558.01H349.11ZM351.94 538.88H354.77V558.01H351.94ZM354.77 541.08H357.59V558.97H354.77ZM357.59 538.21H360.42V555.62H357.59ZM360.42 539.83H363.25V559.93H360.42ZM363.25 533.80H366.08V554.86H363.25ZM366.08 529.02H368.91V554.86H366.08ZM368.91 520.02H371.73V547.97H368.91ZM371.73 520.02H374.56V550.36H371.73ZM374.56 524.81H377.39V555.14H374.56ZM377.39 519.55H380.22V552.75H377.39ZM380.22 520.50H383.05V554.47H380.22ZM383.05 517.44H385.87V551.99H383.05ZM385.87 510.17H388.70V548.44H385.87ZM388.70 511.41H391.53V548.92H388.70ZM391.53 522.89H394.36V552.94H391.53ZM394.36 528.64H397.19V555.43H394.36ZM397.19 529.02H400.01V554.47H397.19ZM400.01 533.13H402.84V558.01H400.01ZM402.84 531.89H405.67V555.14H402.84ZM405.67 533.13H408.50V555.14H405.67ZM408.50 532.18H411.33V554.67H408.50ZM411.33 527.87H414.15V553.23H411.33ZM414.15 536.00H416.98V557.06H414.15ZM416.98 536.29H419.81V557.06H416.98ZM419.81 538.59H422.64V558.30H419.81ZM422.64 536.96H425.47V557.06H422.64ZM425.47 533.80H428.29V553.23H425.47ZM428.29 534.09H431.12V555.43H428.29ZM431.12 536.00H433.95V556.10H431.12ZM433.95 532.66H436.78V553.52H433.95ZM436.78 537.25H439.61V555.62H436.78ZM439.61 533.42H442.43V554.19H439.61ZM442.43 534.57H445.26V555.62H442.43ZM445.26 534.45H448.09V553.78H445.26ZM448.09 533.68H450.92V554.07H448.09ZM450.92 533.01H453.75V555.02H450.92ZM453.75 529.86H456.57V549.76H453.75ZM456.57 527.27H459.40V549.00H456.57ZM459.40 527.27H462.23V549.00H459.40ZM462.23 532.54H465.06V552.15H462.23ZM465.06 535.89H467.89V554.35H465.06ZM467.89 540.19H470.71V555.50H467.89ZM470.71 540.00H473.54V554.74H470.71ZM473.54 542.58H476.37V556.46H473.54ZM476.37 540.96H479.20V556.46H476.37ZM479.20 540.19H482.03V555.02H479.20ZM482.03 541.15H484.85V555.50H482.03ZM484.85 542.11H487.68V557.22H484.85ZM487.68 535.60H490.51V553.59H487.68ZM490.51 537.13H493.34V554.55H490.51ZM493.34 534.26H496.17V554.07H493.34ZM496.17 531.10H498.99V552.63H496.17ZM498.99 529.19H501.82V550.91H498.99ZM501.82 530.14H504.65V549.57H501.82ZM504.65 529.86H507.48V551.48H504.65ZM507.48 528.23H510.31V550.24H507.48ZM510.31 527.94H513.13V550.91H510.31ZM513.13 532.06H515.96V551.87H513.13ZM515.96 528.90H518.79V550.91H515.96ZM518.79 529.86H521.62V552.44H518.79ZM521.62 529.67H524.45V552.15H521.62ZM524.45 528.52H527.27V552.44H524.45ZM527.27 525.07H530.10V551.20H527.27ZM530.10 525.65H532.93V551.87H530.10ZM532.93 529.19H535.76V554.55H532.93ZM535.76 524.69H538.59V551.87H535.76ZM538.59 523.92H541.41V550.24H538.59ZM541.41 527.27H544.24V551.67H541.41ZM544.24 525.07H547.07V550.91H544.24ZM547.07 509.57H549.90V543.83H547.07ZM549.90 517.42H552.73V549.76H549.90ZM552.73 524.11H555.55V555.02H552.73ZM555.55 519.62H558.38V553.40H555.55ZM558.38 520.57H561.21V552.15H558.38ZM561.21 519.62H564.04V551.67H561.21ZM564.04 517.97H566.87V550.98H564.04ZM566.87 510.50H569.69V550.98H566.87ZM569.69 513.37H572.52V553.18H569.69ZM572.52 518.92H575.35V554.81H572.52ZM575.35 510.79H578.18V553.18H575.35ZM578.18 517.20H581.01V553.85H578.18ZM581.01 520.65H583.83V552.22H581.01ZM583.83 524.67H586.66V551.27H583.83ZM586.66 530.60H589.49V555.10H586.66ZM589.49 524.47H592.32V552.70H589.49ZM592.32 528.01H595.15V553.85H592.32ZM595.15 528.49H597.97V553.18H595.15ZM597.97 524.86H600.80V549.74H597.97ZM600.80 522.75H603.63V547.15H600.80ZM603.63 525.43H606.46V550.50H603.63ZM606.46 521.60H609.29V546.67H606.46ZM609.29 524.86H612.11V550.02H609.29ZM612.11 528.49H614.94V551.94H612.11ZM614.94 529.93H617.77V553.18H614.94ZM617.77 526.10H620.60V553.85H617.77ZM620.60 528.01H623.43V552.22H620.60ZM623.43 527.54H626.25V551.46H623.43ZM626.25 528.01H629.08V553.56H626.25ZM629.08 523.52H631.91V550.02H629.08ZM631.91 527.06H634.74V551.65H631.91ZM634.74 525.14H637.57V550.69H634.74ZM637.57 520.07H640.39V548.11H637.57ZM640.39 519.69H643.22V545.72H640.39ZM643.22 516.53H646.05V544.76H643.22ZM646.05 517.20H648.88V546.67H646.05ZM648.88 518.92H651.71V548.40H648.88ZM651.71 520.84H654.53V549.55H651.71ZM654.53 520.07H657.36V549.07H654.53ZM657.36 524.47H660.19V550.31H657.36ZM660.19 528.01H663.02V552.22H660.19ZM663.02 533.47H665.85V554.52H663.02ZM665.85 529.93H668.67V552.89H665.85ZM668.67 527.54H671.50V551.94H668.67ZM671.50 528.49H674.33V552.89H671.50ZM674.33 527.34H677.16V550.69H674.33ZM677.16 527.06H679.99V549.35H677.16ZM679.99 525.43H682.81V546.20H679.99ZM682.81 527.54H685.64V548.11H682.81ZM685.64 529.93H688.47V549.74H685.64ZM688.47 525.62H691.30V549.07H688.47ZM691.30 529.45H694.13V550.02H691.30ZM694.13 527.06H696.95V547.82H694.13ZM696.95 528.68H699.78V550.98H696.95ZM699.78 528.49H702.61V550.69H699.78ZM702.61 528.30H705.44V550.31H702.61ZM705.44 529.64H708.27V551.94H705.44ZM708.27 523.90H711.09V546.67H708.27ZM711.09 528.68H713.92V551.46H711.09ZM713.92 524.19H716.75V547.82H713.92ZM716.75 523.71H719.58V546.87H716.75ZM719.58 522.75H722.41V545.91H719.58ZM722.41 521.03H725.23V543.33H722.41ZM725.23 520.84H728.06V544.00H725.23ZM728.06 514.33H730.89V542.37H728.06ZM730.89 519.69H733.72V544.28H730.89ZM733.72 520.07H736.55V544.28H733.72ZM736.55 517.97H739.37V543.04H736.55ZM739.37 518.73H742.20V542.08H739.37ZM742.20 513.18H745.03V538.25H742.20ZM745.03 512.03H747.86V537.87H745.03ZM747.86 511.75H750.69V539.02H747.86ZM750.69 517.01H753.51V541.12H750.69ZM753.51 516.82H756.34V542.66H753.51ZM756.34 515.29H759.17V541.89H756.34ZM759.17 512.42H762.00V538.25H759.17ZM762.00 516.24H764.83V541.41H762.00ZM764.83 518.44H767.65V543.04H764.83ZM767.65 519.69H770.48V543.80H767.65ZM770.48 517.78H773.31V541.12H770.48ZM773.31 514.90H776.14V540.17H773.31ZM776.14 517.78H778.97V542.85H776.14ZM778.97 513.37H781.79V539.50H778.97ZM781.79 513.95H784.62V541.89H781.79ZM784.62 520.65H787.45V544.76H784.62ZM787.45 520.07H790.28V543.33H787.45ZM790.28 520.84H793.11V544.28H790.28ZM793.11 521.79H795.93V545.72H793.11ZM795.93 520.65H798.76V544.00H795.93ZM798.76 507.25H801.59V536.15H798.76Z" fill="#b0526c"/><path d="M327.80 558.01H329.31V576.20H327.80ZM329.31 557.34H332.14V576.20H329.31ZM332.14 556.77H334.97V576.20H332.14ZM334.97 556.10H337.80V576.20H334.97ZM337.80 558.97H340.63V577.15H337.80ZM340.63 557.54H343.45V576.67H340.63ZM343.45 558.01H346.28V578.11H343.45ZM346.28 560.60H349.11V579.07H346.28ZM349.11 558.01H351.94V577.44H349.11ZM351.94 558.01H354.77V577.15H351.94ZM354.77 558.97H357.59V578.11H354.77ZM357.59 555.62H360.42V577.15H357.59ZM360.42 559.93H363.25V579.07H360.42ZM363.25 554.86H366.08V576.67H363.25ZM366.08 554.86H368.91V576.67H366.08ZM368.91 547.97H371.73V572.85H368.91ZM371.73 550.36H374.56V574.76H371.73ZM374.56 555.14H377.39V578.11H374.56ZM377.39 552.75H380.22V577.15H377.39ZM380.22 554.47H383.05V577.44H380.22ZM383.05 551.99H385.87V575.72H383.05ZM385.87 548.44H388.70V574.76H385.87ZM388.70 548.92H391.53V575.24H388.70ZM391.53 552.94H394.36V577.15H391.53ZM394.36 555.43H397.19V576.67H394.36ZM397.19 554.47H400.01V576.20H397.19ZM400.01 558.01H402.84V577.15H400.01ZM402.84 555.14H405.67V575.24H402.84ZM405.67 555.14H408.50V575.72H405.67ZM408.50 554.67H411.33V575.72H408.50ZM411.33 553.23H414.15V574.76H411.33ZM414.15 557.06H416.98V577.15H414.15ZM416.98 557.06H419.81V576.48H416.98ZM419.81 558.30H422.64V576.20H419.81ZM422.64 557.06H425.47V575.72H422.64ZM425.47 553.23H428.29V575.24H425.47ZM428.29 555.43H431.12V575.72H428.29ZM431.12 556.10H433.95V576.20H431.12ZM433.95 553.52H436.78V574.00H433.95ZM436.78 555.62H439.61V575.24H436.78ZM439.61 554.19H442.43V574.57H439.61ZM442.43 555.62H445.26V574.76H442.43ZM445.26 553.78H448.09V573.28H445.26ZM448.09 554.07H450.92V574.04H448.09ZM450.92 555.02H453.75V575.96H450.92ZM453.75 549.76H456.57V572.80H453.75ZM456.57 549.00H459.40V574.04H456.57ZM459.40 549.00H462.23V574.04H459.40ZM462.23 552.15H465.06V575.96H462.23ZM465.06 554.35H467.89V575.67H465.06ZM467.89 555.50H470.71V575.19H467.89ZM470.71 554.74H473.54V576.91H470.71ZM473.54 556.46H476.37V576.15H473.54ZM476.37 556.46H479.20V576.91H476.37ZM479.20 555.02H482.03V575.67H479.20ZM482.03 555.50H484.85V576.15H482.03ZM484.85 557.22H487.68V577.11H484.85ZM487.68 553.59H490.51V575.38H487.68ZM490.51 554.55H493.34V577.58H490.51ZM493.34 554.07H496.17V577.11H493.34ZM496.17 552.63H498.99V577.30H496.17ZM498.99 550.91H501.82V575.38H498.99ZM501.82 549.57H504.65V576.15H501.82ZM504.65 551.48H507.48V576.34H504.65ZM507.48 550.24H510.31V576.34H507.48ZM510.31 550.91H513.13V578.06H510.31ZM513.13 551.87H515.96V576.91H513.13ZM515.96 550.91H518.79V576.15H515.96ZM518.79 552.44H521.62V576.63H518.79ZM521.62 552.15H524.45V576.91H521.62ZM524.45 552.44H527.27V576.34H524.45ZM527.27 551.20H530.10V577.11H527.27ZM530.10 551.87H532.93V577.58H530.10ZM532.93 554.55H535.76V577.11H532.93ZM535.76 551.87H538.59V578.06H535.76ZM538.59 550.24H541.41V577.58H538.59ZM541.41 551.67H544.24V576.34H541.41ZM544.24 550.91H547.07V576.91H544.24ZM547.07 543.83H549.90V576.15H547.07ZM549.90 549.76H552.73V576.91H549.90ZM552.73 555.02H555.55V579.78H552.73ZM555.55 553.40H558.38V578.06H555.55ZM558.38 552.15H561.21V577.11H558.38ZM561.21 551.67H564.04V576.91H561.21ZM564.04 550.98H566.87V577.11H564.04ZM566.87 550.98H569.69V577.11H566.87ZM569.69 553.18H572.52V577.58H569.69ZM572.52 554.81H575.35V578.06H572.52ZM575.35 553.18H578.18V577.58H575.35ZM578.18 553.85H581.01V575.38H578.18ZM581.01 552.22H583.83V576.91H581.01ZM583.83 551.27H586.66V577.11H583.83ZM586.66 555.10H589.49V577.58H586.66ZM589.49 552.70H592.32V575.00H589.49ZM592.32 553.85H595.15V576.63H592.32ZM595.15 553.18H597.97V575.67H595.15ZM597.97 549.74H600.80V575.19H597.97ZM600.80 547.15H603.63V573.28H600.80ZM603.63 550.50H606.46V574.43H603.63ZM606.46 546.67H609.29V573.47H606.46ZM609.29 550.02H612.11V574.43H609.29ZM612.11 551.94H614.94V575.19H612.11ZM614.94 553.18H617.77V575.67H614.94ZM617.77 553.85H620.60V576.91H617.77ZM620.60 552.22H623.43V576.15H620.60ZM623.43 551.46H626.25V575.38H623.43ZM626.25 553.56H629.08V576.34H626.25ZM629.08 550.02H631.91V575.19H629.08ZM631.91 551.65H634.74V576.15H631.91ZM634.74 550.69H637.57V575.19H634.74ZM637.57 548.11H640.39V575.00H637.57ZM640.39 545.72H643.22V573.76H640.39ZM643.22 544.76H646.05V573.28H643.22ZM646.05 546.67H648.88V573.76H646.05ZM648.88 548.40H651.71V575.00H648.88ZM651.71 549.55H654.53V575.96H651.71ZM654.53 549.07H657.36V575.96H654.53ZM657.36 550.31H660.19V575.96H657.36ZM660.19 552.22H663.02V576.34H660.19ZM663.02 554.52H665.85V577.11H663.02ZM665.85 552.89H668.67V576.91H665.85ZM668.67 551.94H671.50V576.15H668.67ZM671.50 552.89H674.33V576.34H671.50ZM674.33 550.69H677.16V575.38H674.33ZM677.16 549.35H679.99V574.23H677.16ZM679.99 546.20H682.81V572.32H679.99ZM682.81 548.11H685.64V573.28H682.81ZM685.64 549.74H688.47V574.71H685.64ZM688.47 549.07H691.30V575.00H688.47ZM691.30 550.02H694.13V575.96H691.30ZM694.13 547.82H696.95V574.71H694.13ZM696.95 550.98H699.78V575.00H696.95ZM699.78 550.69H702.61V574.43H699.78ZM702.61 550.31H705.44V574.43H702.61ZM705.44 551.94H708.27V575.19H705.44ZM708.27 546.67H711.09V573.09H708.27ZM711.09 551.46H713.92V575.00H711.09ZM713.92 547.82H716.75V573.09H713.92ZM716.75 546.87H719.58V572.13H716.75ZM719.58 545.91H722.41V571.84H719.58ZM722.41 543.33H725.23V571.17H722.41ZM725.23 544.00H728.06V571.84H725.23ZM728.06 542.37H730.89V571.56H728.06ZM730.89 544.28H733.72V571.84H730.89ZM733.72 544.28H736.55V571.84H733.72ZM736.55 543.04H739.37V570.60H736.55ZM739.37 542.08H742.20V570.60H739.37ZM742.20 538.25H745.03V567.73H742.20ZM745.03 537.87H747.86V569.45H745.03ZM747.86 539.02H750.69V571.56H747.86ZM750.69 541.12H753.51V571.84H750.69ZM753.51 542.66H756.34V572.80H753.51ZM756.34 541.89H759.17V571.84H756.34ZM759.17 538.25H762.00V570.60H759.17ZM762.00 541.41H764.83V570.41H762.00ZM764.83 543.04H767.65V570.60H764.83ZM767.65 543.80H770.48V571.84H767.65ZM770.48 541.12H773.31V569.45H770.48ZM773.31 540.17H776.14V571.36H773.31ZM776.14 542.85H778.97V571.84H776.14ZM778.97 539.50H781.79V570.60H778.97ZM781.79 541.89H784.62V571.84H781.79ZM784.62 544.76H787.45V571.56H784.62ZM787.45 543.33H790.28V572.13H787.45ZM790.28 544.28H793.11V572.32H790.28ZM793.11 545.72H795.93V573.47H793.11ZM795.93 544.00H798.76V572.32H795.93ZM798.76 536.15H801.59V572.13H798.76Z" fill="#4b649b"/><path d="M327.80 576.20H329.31V597.50H327.80ZM329.31 576.20H332.14V597.50H329.31ZM332.14 576.20H334.97V597.50H332.14ZM334.97 576.20H337.80V597.50H334.97ZM337.80 577.15H340.63V597.50H337.80ZM340.63 576.67H343.45V597.50H340.63ZM343.45 578.11H346.28V597.50H343.45ZM346.28 579.07H349.11V597.50H346.28ZM349.11 577.44H351.94V597.50H349.11ZM351.94 577.15H354.77V597.50H351.94ZM354.77 578.11H357.59V597.50H354.77ZM357.59 577.15H360.42V597.50H357.59ZM360.42 579.07H363.25V597.50H360.42ZM363.25 576.67H366.08V597.50H363.25ZM366.08 576.67H368.91V597.50H366.08ZM368.91 572.85H371.73V597.50H368.91ZM371.73 574.76H374.56V597.50H371.73ZM374.56 578.11H377.39V597.50H374.56ZM377.39 577.15H380.22V597.50H377.39ZM380.22 577.44H383.05V597.50H380.22ZM383.05 575.72H385.87V597.50H383.05ZM385.87 574.76H388.70V597.50H385.87ZM388.70 575.24H391.53V597.50H388.70ZM391.53 577.15H394.36V597.50H391.53ZM394.36 576.67H397.19V597.50H394.36ZM397.19 576.20H400.01V597.50H397.19ZM400.01 577.15H402.84V597.50H400.01ZM402.84 575.24H405.67V597.50H402.84ZM405.67 575.72H408.50V597.50H405.67ZM408.50 575.72H411.33V597.50H408.50ZM411.33 574.76H414.15V597.50H411.33ZM414.15 577.15H416.98V597.50H414.15ZM416.98 576.48H419.81V597.50H416.98ZM419.81 576.20H422.64V597.50H419.81ZM422.64 575.72H425.47V597.50H422.64ZM425.47 575.24H428.29V597.50H425.47ZM428.29 575.72H431.12V597.50H428.29ZM431.12 576.20H433.95V597.50H431.12ZM433.95 574.00H436.78V597.50H433.95ZM436.78 575.24H439.61V597.50H436.78ZM439.61 574.57H442.43V597.50H439.61ZM442.43 574.76H445.26V597.50H442.43ZM445.26 573.28H448.09V597.50H445.26ZM448.09 574.04H450.92V597.50H448.09ZM450.92 575.96H453.75V597.50H450.92ZM453.75 572.80H456.57V597.50H453.75ZM456.57 574.04H459.40V597.50H456.57ZM459.40 574.04H462.23V597.50H459.40ZM462.23 575.96H465.06V597.50H462.23ZM465.06 575.67H467.89V597.50H465.06ZM467.89 575.19H470.71V597.50H467.89ZM470.71 576.91H473.54V597.50H470.71ZM473.54 576.15H476.37V597.50H473.54ZM476.37 576.91H479.20V597.50H476.37ZM479.20 575.67H482.03V597.50H479.20ZM482.03 576.15H484.85V597.50H482.03ZM484.85 577.11H487.68V597.50H484.85ZM487.68 575.38H490.51V597.50H487.68ZM490.51 577.58H493.34V597.50H490.51ZM493.34 577.11H496.17V597.50H493.34ZM496.17 577.30H498.99V597.50H496.17ZM498.99 575.38H501.82V597.50H498.99ZM501.82 576.15H504.65V597.50H501.82ZM504.65 576.34H507.48V597.50H504.65ZM507.48 576.34H510.31V597.50H507.48ZM510.31 578.06H513.13V597.50H510.31ZM513.13 576.91H515.96V597.50H513.13ZM515.96 576.15H518.79V597.50H515.96ZM518.79 576.63H521.62V597.50H518.79ZM521.62 576.91H524.45V597.50H521.62ZM524.45 576.34H527.27V597.50H524.45ZM527.27 577.11H530.10V597.50H527.27ZM530.10 577.58H532.93V597.50H530.10ZM532.93 577.11H535.76V597.50H532.93ZM535.76 578.06H538.59V597.50H535.76ZM538.59 577.58H541.41V597.50H538.59ZM541.41 576.34H544.24V597.50H541.41ZM544.24 576.91H547.07V597.50H544.24ZM547.07 576.15H549.90V597.50H547.07ZM549.90 576.91H552.73V597.50H549.90ZM552.73 579.78H555.55V597.50H552.73ZM555.55 578.06H558.38V597.50H555.55ZM558.38 577.11H561.21V597.50H558.38ZM561.21 576.91H564.04V597.50H561.21ZM564.04 577.11H566.87V597.50H564.04ZM566.87 577.11H569.69V597.50H566.87ZM569.69 577.58H572.52V597.50H569.69ZM572.52 578.06H575.35V597.50H572.52ZM575.35 577.58H578.18V597.50H575.35ZM578.18 575.38H581.01V597.50H578.18ZM581.01 576.91H583.83V597.50H581.01ZM583.83 577.11H586.66V597.50H583.83ZM586.66 577.58H589.49V597.50H586.66ZM589.49 575.00H592.32V597.50H589.49ZM592.32 576.63H595.15V597.50H592.32ZM595.15 575.67H597.97V597.50H595.15ZM597.97 575.19H600.80V597.50H597.97ZM600.80 573.28H603.63V597.50H600.80ZM603.63 574.43H606.46V597.50H603.63ZM606.46 573.47H609.29V597.50H606.46ZM609.29 574.43H612.11V597.50H609.29ZM612.11 575.19H614.94V597.50H612.11ZM614.94 575.67H617.77V597.50H614.94ZM617.77 576.91H620.60V597.50H617.77ZM620.60 576.15H623.43V597.50H620.60ZM623.43 575.38H626.25V597.50H623.43ZM626.25 576.34H629.08V597.50H626.25ZM629.08 575.19H631.91V597.50H629.08ZM631.91 576.15H634.74V597.50H631.91ZM634.74 575.19H637.57V597.50H634.74ZM637.57 575.00H640.39V597.50H637.57ZM640.39 573.76H643.22V597.50H640.39ZM643.22 573.28H646.05V597.50H643.22ZM646.05 573.76H648.88V597.50H646.05ZM648.88 575.00H651.71V597.50H648.88ZM651.71 575.96H654.53V597.50H651.71ZM654.53 575.96H657.36V597.50H654.53ZM657.36 575.96H660.19V597.50H657.36ZM660.19 576.34H663.02V597.50H660.19ZM663.02 577.11H665.85V597.50H663.02ZM665.85 576.91H668.67V597.50H665.85ZM668.67 576.15H671.50V597.50H668.67ZM671.50 576.34H674.33V597.50H671.50ZM674.33 575.38H677.16V597.50H674.33ZM677.16 574.23H679.99V597.50H677.16ZM679.99 572.32H682.81V597.50H679.99ZM682.81 573.28H685.64V597.50H682.81ZM685.64 574.71H688.47V597.50H685.64ZM688.47 575.00H691.30V597.50H688.47ZM691.30 575.96H694.13V597.50H691.30ZM694.13 574.71H696.95V597.50H694.13ZM696.95 575.00H699.78V597.50H696.95ZM699.78 574.43H702.61V597.50H699.78ZM702.61 574.43H705.44V597.50H702.61ZM705.44 575.19H708.27V597.50H705.44ZM708.27 573.09H711.09V597.50H708.27ZM711.09 575.00H713.92V597.50H711.09ZM713.92 573.09H716.75V597.50H713.92ZM716.75 572.13H719.58V597.50H716.75ZM719.58 571.84H722.41V597.50H719.58ZM722.41 571.17H725.23V597.50H722.41ZM725.23 571.84H728.06V597.50H725.23ZM728.06 571.56H730.89V597.50H728.06ZM730.89 571.84H733.72V597.50H730.89ZM733.72 571.84H736.55V597.50H733.72ZM736.55 570.60H739.37V597.50H736.55ZM739.37 570.60H742.20V597.50H739.37ZM742.20 567.73H745.03V597.50H742.20ZM745.03 569.45H747.86V597.50H745.03ZM747.86 571.56H750.69V597.50H747.86ZM750.69 571.84H753.51V597.50H750.69ZM753.51 572.80H756.34V597.50H753.51ZM756.34 571.84H759.17V597.50H756.34ZM759.17 570.60H762.00V597.50H759.17ZM762.00 570.41H764.83V597.50H762.00ZM764.83 570.60H767.65V597.50H764.83ZM767.65 571.84H770.48V597.50H767.65ZM770.48 569.45H773.31V597.50H770.48ZM773.31 571.36H776.14V597.50H773.31ZM776.14 571.84H778.97V597.50H776.14ZM778.97 570.60H781.79V597.50H778.97ZM781.79 571.84H784.62V597.50H781.79ZM784.62 571.56H787.45V597.50H784.62ZM787.45 572.13H790.28V597.50H787.45ZM790.28 572.32H793.11V597.50H790.28ZM793.11 573.47H795.93V597.50H793.11ZM795.93 572.32H798.76V597.50H795.93ZM798.76 572.13H801.59V597.50H798.76Z" fill="#3e5280"/><path d="M327.80 487.97H328.47V495.14H327.80ZM330.15 486.82H331.30V494.47H330.15ZM332.98 480.31H334.13V490.36H332.98ZM335.81 484.81H336.96V493.52H335.81ZM338.64 487.78H339.79V495.14H338.64ZM341.46 480.79H342.61V490.84H341.46ZM344.29 481.75H345.44V491.03H344.29ZM347.12 479.55H348.27V490.36H347.12ZM349.95 475.05H351.10V486.24H349.95ZM352.78 462.89H353.93V475.33H352.78ZM355.60 470.93H356.75V481.75H355.60ZM358.43 467.68H359.58V478.40H358.43ZM361.26 464.14H362.41V476.29H361.26ZM364.09 454.76H365.24V467.39H364.09ZM366.92 435.43H368.07V448.83H366.92ZM369.75 428.92H370.89V440.41H369.75ZM372.57 419.83H373.72V433.23H372.57ZM375.40 436.10H376.55V449.02H375.40ZM378.23 437.06H379.38V448.83H378.23ZM381.06 427.97H382.21V441.36H381.06ZM383.88 431.03H385.03V444.43H383.88ZM386.71 419.83H387.86V433.90H386.71ZM389.54 428.92H390.69V441.36H389.54ZM392.37 453.80H393.52V465.48H392.37ZM395.20 462.42H396.35V473.13H395.20ZM398.02 460.31H399.17V471.22H398.02ZM400.85 470.93H402.00V480.12H400.85ZM403.68 468.64H404.83V479.35H403.68ZM406.51 473.61H407.66V482.42H406.51ZM409.34 473.33H410.49V482.70H409.34ZM412.16 465.77H413.31V476.48H412.16ZM414.99 479.35H416.14V487.49H414.99ZM417.82 479.07H418.97V486.82H417.82ZM420.65 483.18H421.80V490.65H420.65ZM423.48 482.42H424.63V490.36H423.48ZM426.31 482.89H427.45V489.69H426.31ZM429.13 480.50H430.28V488.92H429.13ZM431.96 480.79H433.11V489.88H431.96ZM434.79 486.82H435.94V492.75H434.79ZM437.62 484.14H438.77V491.60H437.62ZM440.44 481.75H441.59V488.92H440.44ZM443.27 482.22H444.42V490.36H443.27ZM446.10 482.58H447.25V492.15H446.10ZM448.93 481.34H450.08V489.76H448.93ZM451.76 478.76H452.91V487.85H451.76ZM454.58 477.51H455.73V485.74H454.58ZM457.41 475.60H458.56V483.54H457.41ZM460.24 477.13H461.39V484.98H460.24ZM463.07 479.04H464.22V487.85H463.07ZM465.90 482.11H467.05V491.67H465.90ZM468.72 488.61H469.87V495.50H468.72ZM471.55 486.70H472.70V494.74H471.55ZM474.38 494.07H475.53V499.33H474.38ZM477.21 487.85H478.36V495.69H477.21ZM480.04 491.48H481.19V498.37H480.04ZM482.86 488.33H484.01V496.46H482.86ZM485.69 491.20H486.84V498.56H485.69ZM488.52 484.78H489.67V492.44H488.52ZM491.35 481.91H492.50V489.28H491.35ZM494.18 484.78H495.33V491.87H494.18ZM497.00 477.80H498.15V485.74H497.00ZM499.83 476.84H500.98V483.83H499.83ZM502.66 476.84H503.81V485.17H502.66ZM505.49 480.67H506.64V486.89H505.49ZM508.32 472.06H509.47V479.71H508.32ZM511.14 468.23H512.29V478.47H511.14ZM513.97 479.43H515.12V487.66H513.97ZM516.80 470.14H517.95V477.51H516.80ZM519.63 474.93H520.78V481.63H519.63ZM522.46 473.01H523.61V482.11H522.46ZM525.28 471.10H526.43V478.76H525.28ZM528.11 451.29H529.26V461.82H528.11ZM530.94 452.25H532.09V462.78H530.94ZM533.77 462.97H534.92V472.06H533.77ZM536.60 450.33H537.75V460.29H536.60ZM539.42 452.92H540.58V462.49H539.42ZM542.25 458.66H543.40V468.23H542.25ZM545.08 455.79H546.23V464.69H545.08ZM547.91 431.17H549.06V442.39H547.91ZM550.74 436.34H551.89V448.13H550.74ZM553.56 448.13H554.72V460.10H553.56ZM556.39 430.89H557.54V443.35H556.39ZM559.22 436.15H560.37V447.18H559.22ZM562.05 445.74H563.20V455.79H562.05ZM564.88 435.00H566.03V447.44H564.88ZM567.70 409.55H568.86V423.23H567.70ZM570.53 418.44H571.68V431.56H570.53ZM573.36 434.23H574.51V446.67H573.36ZM576.19 413.95H577.34V428.01H576.19ZM579.02 428.97H580.17V440.17H579.02ZM581.84 443.33H583.00V454.81H581.84ZM584.67 447.15H585.82V457.97H584.67ZM587.50 454.14H588.65V464.47H587.50ZM590.33 450.02H591.48V460.65H590.33ZM593.16 462.75H594.31V471.84H593.16ZM595.98 464.47H597.13V473.76H595.98ZM598.81 455.29H599.96V466.10H598.81ZM601.64 454.62H602.79V464.67H601.64ZM604.47 461.32H605.62V470.60H604.47ZM607.30 456.24H608.45V465.43H607.30ZM610.12 452.89H611.28V464.47H610.12ZM612.95 463.52H614.10V473.28H612.95ZM615.78 464.67H616.93V474.04H615.78ZM618.61 460.36H619.76V469.93H618.61ZM621.44 465.62H622.59V474.43H621.44ZM624.26 462.27H625.41V472.80H624.26ZM627.09 459.88H628.24V470.60H627.09ZM629.92 448.59H631.07V459.40H629.92ZM632.75 457.78H633.90V466.58H632.75ZM635.58 457.20H636.73V466.39H635.58ZM638.40 447.92H639.56V458.73H638.40ZM641.23 450.79H642.38V460.07H641.23ZM644.06 444.09H645.21V455.10H644.06ZM646.89 446.96H648.04V456.24H646.89ZM649.72 452.70H650.87V461.99H649.72ZM652.54 459.11H653.69V467.54H652.54ZM655.37 459.40H656.52V467.73H655.37ZM658.20 463.23H659.35V470.41H658.20ZM661.03 467.73H662.18V476.34H661.03ZM663.86 476.15H665.01V484.57H663.86ZM666.68 465.81H667.84V474.23H666.68ZM669.51 461.60H670.66V470.41H669.51ZM672.34 468.97H673.49V477.11H672.34ZM675.17 465.43H676.32V473.47H675.17ZM678.00 465.14H679.15V472.32H678.00ZM680.82 463.52H681.98V473.09H680.82ZM683.65 467.06H684.80V475.19H683.65ZM686.48 467.54H687.63V475.19H686.48ZM689.31 459.69H690.46V468.97H689.31ZM692.14 468.01H693.29V476.34H692.14ZM694.96 464.47H696.12V473.28H694.96ZM697.79 466.58H698.94V474.71H697.79ZM700.62 465.43H701.77V475.00H700.62ZM703.45 467.06H704.60V476.15H703.45ZM706.28 466.10H707.43V474.43H706.28ZM709.10 457.78H710.25V467.54H709.10ZM711.93 472.51H713.08V479.21H711.93ZM714.76 462.56H715.91V471.17H714.76ZM717.59 455.57H718.74V465.81H717.59ZM720.42 456.53H721.57V466.39H720.42ZM723.24 457.78H724.39V466.58H723.24ZM726.07 452.22H727.22V460.65H726.07ZM728.90 440.74H730.05V450.12H728.90ZM731.73 449.55H732.88V458.73H731.73ZM734.56 452.42H735.71V461.79H734.56ZM737.38 453.66H738.54V461.79H737.38ZM740.21 450.12H741.36V460.07H740.21ZM743.04 447.92H744.19V456.24H743.04ZM745.87 441.22H747.02V450.31H745.87ZM748.70 438.83H749.85V448.21H748.70ZM751.52 449.35H752.67V457.20H751.52ZM754.35 444.57H755.50V453.95H754.35ZM757.18 443.80H758.33V452.70H757.18ZM760.01 439.98H761.16V450.12H760.01ZM762.84 446.96H763.99V456.82H762.84ZM765.66 445.33H766.82V456.05H765.66ZM768.49 445.33H769.64V455.29H768.49ZM771.32 450.79H772.47V459.40H771.32ZM774.15 446.00H775.30V454.33H774.15ZM776.98 451.75H778.13V460.07H776.98ZM779.80 445.72H780.95V455.86H779.80ZM782.63 446.29H783.78V455.57H782.63ZM785.46 452.42H786.61V460.65H785.46ZM788.29 447.25H789.44V456.82H788.29ZM791.12 453.95H792.27V462.56H791.12ZM793.94 456.24H795.10V464.67H793.94ZM796.77 455.57H797.92V464.19H796.77ZM799.60 439.78H800.75V449.55H799.60Z" fill="#ffb940"/><path d="M327.80 495.14H328.47V510.93H327.80ZM330.15 494.47H331.30V510.74H330.15ZM332.98 490.36H334.13V509.78H332.98ZM335.81 493.52H336.96V509.78H335.81ZM338.64 495.14H339.79V511.89H338.64ZM341.46 490.84H342.61V509.98H341.46ZM344.29 491.03H345.44V510.74H344.29ZM347.12 490.36H348.27V510.93H347.12ZM349.95 486.24H351.10V506.63H349.95ZM352.78 475.33H353.93V501.36H352.78ZM355.60 481.75H356.75V505.19H355.60ZM358.43 478.40H359.58V501.84H358.43ZM361.26 476.29H362.41V501.84H361.26ZM364.09 467.39H365.24V494.67H364.09ZM366.92 448.83H368.07V482.70H366.92ZM369.75 440.41H370.89V473.42H369.75ZM372.57 433.23H373.72V468.35H372.57ZM375.40 449.02H376.55V478.40H375.40ZM378.23 448.83H379.38V475.33H378.23ZM381.06 441.36H382.21V473.13H381.06ZM383.88 444.43H385.03V472.46H383.88ZM386.71 433.90H387.86V463.09H386.71ZM389.54 441.36H390.69V465.48H389.54ZM392.37 465.48H393.52V484.62H392.37ZM395.20 473.13H396.35V490.36H395.20ZM398.02 471.22H399.17V489.88H398.02ZM400.85 480.12H402.00V497.06H400.85ZM403.68 479.35H404.83V495.81H403.68ZM406.51 482.42H407.66V498.97H406.51ZM409.34 482.70H410.49V499.64H409.34ZM412.16 476.48H413.31V494.67H412.16ZM414.99 487.49H416.14V503.09H414.99ZM417.82 486.82H418.97V503.76H417.82ZM420.65 490.65H421.80V505.96H420.65ZM423.48 490.36H424.63V505.00H423.48ZM426.31 489.69H427.45V502.80H426.31ZM429.13 488.92H430.28V501.84H429.13ZM431.96 489.88H433.11V503.76H431.96ZM434.79 492.75H435.94V503.09H434.79ZM437.62 491.60H438.77V505.00H437.62ZM440.44 488.92H441.59V501.84H440.44ZM443.27 490.36H444.42V503.76H443.27ZM446.10 492.15H447.25V502.87H446.10ZM448.93 489.76H450.08V502.11H448.93ZM451.76 487.85H452.91V500.48H451.76ZM454.58 485.74H455.73V497.89H454.58ZM457.41 483.54H458.56V495.98H457.41ZM460.24 484.98H461.39V496.94H460.24ZM463.07 487.85H464.22V500.10H463.07ZM465.90 491.67H467.05V503.83H465.90ZM468.72 495.50H469.87V509.09H468.72ZM471.55 494.74H472.70V508.42H471.55ZM474.38 499.33H475.53V510.72H474.38ZM477.21 495.69H478.36V508.80H477.21ZM480.04 498.37H481.19V509.57H480.04ZM482.86 496.46H484.01V508.80H482.86ZM485.69 498.56H486.84V511.29H485.69ZM488.52 492.44H489.67V503.83H488.52ZM491.35 489.28H492.50V503.35H491.35ZM494.18 491.87H495.33V502.39H494.18ZM497.00 485.74H498.15V498.37H497.00ZM499.83 483.83H500.98V495.98H499.83ZM502.66 485.17H503.81V497.42H502.66ZM505.49 486.89H506.64V498.85H505.49ZM508.32 479.71H509.47V493.59H508.32ZM511.14 478.47H512.29V491.67H511.14ZM513.97 487.66H515.12V499.33H513.97ZM516.80 477.51H517.95V491.67H516.80ZM519.63 481.63H520.78V494.35H519.63ZM522.46 482.11H523.61V495.69H522.46ZM525.28 478.76H526.43V492.15H525.28ZM528.11 461.82H529.26V482.11H528.11ZM530.94 462.78H532.09V481.63H530.94ZM533.77 472.06H534.92V489.28H533.77ZM536.60 460.29H537.75V480.19H536.60ZM539.42 462.49H540.58V479.43H539.42ZM542.25 468.23H543.40V484.78H542.25ZM545.08 464.69H546.23V483.06H545.08ZM547.91 442.39H549.06V462.97H547.91ZM550.74 448.13H551.89V470.14H550.74ZM553.56 460.10H554.72V480.67H553.56ZM556.39 443.35H557.54V467.75H556.39ZM559.22 447.18H560.37V472.54H559.22ZM562.05 455.79H563.20V476.36H562.05ZM564.88 447.44H566.03V473.28H564.88ZM567.70 423.23H568.86V457.20H567.70ZM570.53 431.56H571.68V462.27H570.53ZM573.36 446.67H574.51V472.13H573.36ZM576.19 428.01H577.34V460.07H576.19ZM579.02 440.17H580.17V468.49H579.02ZM581.84 454.81H583.00V477.58H581.84ZM584.67 457.97H585.82V480.45H584.67ZM587.50 464.47H588.65V484.57H587.50ZM590.33 460.65H591.48V479.02H590.33ZM593.16 471.84H594.31V487.44H593.16ZM595.98 473.76H597.13V490.98H595.98ZM598.81 466.10H599.96V484.28H598.81ZM601.64 464.67H602.79V482.37H601.64ZM604.47 470.60H605.62V486.20H604.47ZM607.30 465.43H608.45V481.89H607.30ZM610.12 464.47H611.28V483.80H610.12ZM612.95 473.28H614.10V489.07H612.95ZM615.78 474.04H616.93V490.98H615.78ZM618.61 469.93H619.76V486.67H618.61ZM621.44 474.43H622.59V490.50H621.44ZM624.26 472.80H625.41V490.98H624.26ZM627.09 470.60H628.24V488.78H627.09ZM629.92 459.40H631.07V480.17H629.92ZM632.75 466.58H633.90V484.76H632.75ZM635.58 466.39H636.73V483.04H635.58ZM638.40 458.73H639.56V476.34H638.40ZM641.23 460.07H642.38V478.25H641.23ZM644.06 455.10H645.21V474.43H644.06ZM646.89 456.24H648.04V473.47H646.89ZM649.72 461.99H650.87V478.06H649.72ZM652.54 467.54H653.69V482.66H652.54ZM655.37 467.73H656.52V482.66H655.37ZM658.20 470.41H659.35V486.67H658.20ZM661.03 476.34H662.18V490.69H661.03ZM663.86 484.57H665.01V497.97H663.86ZM666.68 474.23H667.84V490.69H666.68ZM669.51 470.41H670.66V486.48H669.51ZM672.34 477.11H673.49V492.22H672.34ZM675.17 473.47H676.32V488.78H675.17ZM678.00 472.32H679.15V487.15H678.00ZM680.82 473.09H681.98V488.78H680.82ZM683.65 475.19H684.80V490.69H683.65ZM686.48 475.19H687.63V490.69H686.48ZM689.31 468.97H690.46V485.91H689.31ZM692.14 476.34H693.29V492.42H692.14ZM694.96 473.28H696.12V487.82H694.96ZM697.79 474.71H698.94V489.74H697.79ZM700.62 475.00H701.77V489.07H700.62ZM703.45 476.15H704.60V490.69H703.45ZM706.28 474.43H707.43V490.31H706.28ZM709.10 467.54H710.25V483.33H709.10ZM711.93 479.21H713.08V493.56H711.93ZM714.76 471.17H715.91V485.53H714.76ZM717.59 465.81H718.74V483.61H717.59ZM720.42 466.39H721.57V483.80H720.42ZM723.24 466.58H724.39V483.80H723.24ZM726.07 460.65H727.22V477.87H726.07ZM728.90 450.12H730.05V469.93H728.90ZM731.73 458.73H732.88V476.15H731.73ZM734.56 461.79H735.71V478.54H734.56ZM737.38 461.79H738.54V478.54H737.38ZM740.21 460.07H741.36V478.06H740.21ZM743.04 456.24H744.19V472.80H743.04ZM745.87 450.31H747.02V468.01H745.87ZM748.70 448.21H749.85V467.54H748.70ZM751.52 457.20H752.67V476.15H751.52ZM754.35 453.95H755.50V473.28H754.35ZM757.18 452.70H758.33V471.84H757.18ZM760.01 450.12H761.16V470.22H760.01ZM762.84 456.82H763.99V474.71H762.84ZM765.66 456.05H766.82V475.67H765.66ZM768.49 455.29H769.64V476.91H768.49ZM771.32 459.40H772.47V476.91H771.32ZM774.15 454.33H775.30V473.28H774.15ZM776.98 460.07H778.13V477.58H776.98ZM779.80 455.86H780.95V474.43H779.80ZM782.63 455.57H783.78V473.47H782.63ZM785.46 460.65H786.61V479.21H785.46ZM788.29 456.82H789.44V476.15H788.29ZM791.12 462.56H792.27V480.74H791.12ZM793.94 464.67H795.10V481.70H793.94ZM796.77 464.19H797.92V481.41H796.77ZM799.60 449.55H800.75V466.77H799.60Z" fill="#ee7e35"/><path d="M327.80 510.93H328.47V542.70H327.80ZM330.15 510.74H331.30V541.46H330.15ZM332.98 509.78H334.13V540.12H332.98ZM335.81 509.78H336.96V539.35H335.81ZM338.64 511.89H339.79V542.70H338.64ZM341.46 509.98H342.61V542.03H341.46ZM344.29 510.74H345.44V542.22H344.29ZM347.12 510.93H348.27V544.62H347.12ZM349.95 506.63H351.10V542.70H349.95ZM352.78 501.36H353.93V538.88H352.78ZM355.60 505.19H356.75V541.08H355.60ZM358.43 501.84H359.58V538.21H358.43ZM361.26 501.84H362.41V539.83H361.26ZM364.09 494.67H365.24V533.80H364.09ZM366.92 482.70H368.07V529.02H366.92ZM369.75 473.42H370.89V520.02H369.75ZM372.57 468.35H373.72V520.02H372.57ZM375.40 478.40H376.55V524.81H375.40ZM378.23 475.33H379.38V519.55H378.23ZM381.06 473.13H382.21V520.50H381.06ZM383.88 472.46H385.03V517.44H383.88ZM386.71 463.09H387.86V510.17H386.71ZM389.54 465.48H390.69V511.41H389.54ZM392.37 484.62H393.52V522.89H392.37ZM395.20 490.36H396.35V528.64H395.20ZM398.02 489.88H399.17V529.02H398.02ZM400.85 497.06H402.00V533.13H400.85ZM403.68 495.81H404.83V531.89H403.68ZM406.51 498.97H407.66V533.13H406.51ZM409.34 499.64H410.49V532.18H409.34ZM412.16 494.67H413.31V527.87H412.16ZM414.99 503.09H416.14V536.00H414.99ZM417.82 503.76H418.97V536.29H417.82ZM420.65 505.96H421.80V538.59H420.65ZM423.48 505.00H424.63V536.96H423.48ZM426.31 502.80H427.45V533.80H426.31ZM429.13 501.84H430.28V534.09H429.13ZM431.96 503.76H433.11V536.00H431.96ZM434.79 503.09H435.94V532.66H434.79ZM437.62 505.00H438.77V537.25H437.62ZM440.44 501.84H441.59V533.42H440.44ZM443.27 503.76H444.42V534.57H443.27ZM446.10 502.87H447.25V534.45H446.10ZM448.93 502.11H450.08V533.68H448.93ZM451.76 500.48H452.91V533.01H451.76ZM454.58 497.89H455.73V529.86H454.58ZM457.41 495.98H458.56V527.27H457.41ZM460.24 496.94H461.39V527.27H460.24ZM463.07 500.10H464.22V532.54H463.07ZM465.90 503.83H467.05V535.89H465.90ZM468.72 509.09H469.87V540.19H468.72ZM471.55 508.42H472.70V540.00H471.55ZM474.38 510.72H475.53V542.58H474.38ZM477.21 508.80H478.36V540.96H477.21ZM480.04 509.57H481.19V540.19H480.04ZM482.86 508.80H484.01V541.15H482.86ZM485.69 511.29H486.84V542.11H485.69ZM488.52 503.83H489.67V535.60H488.52ZM491.35 503.35H492.50V537.13H491.35ZM494.18 502.39H495.33V534.26H494.18ZM497.00 498.37H498.15V531.10H497.00ZM499.83 495.98H500.98V529.19H499.83ZM502.66 497.42H503.81V530.14H502.66ZM505.49 498.85H506.64V529.86H505.49ZM508.32 493.59H509.47V528.23H508.32ZM511.14 491.67H512.29V527.94H511.14ZM513.97 499.33H515.12V532.06H513.97ZM516.80 491.67H517.95V528.90H516.80ZM519.63 494.35H520.78V529.86H519.63ZM522.46 495.69H523.61V529.67H522.46ZM525.28 492.15H526.43V528.52H525.28ZM528.11 482.11H529.26V525.07H528.11ZM530.94 481.63H532.09V525.65H530.94ZM533.77 489.28H534.92V529.19H533.77ZM536.60 480.19H537.75V524.69H536.60ZM539.42 479.43H540.58V523.92H539.42ZM542.25 484.78H543.40V527.27H542.25ZM545.08 483.06H546.23V525.07H545.08ZM547.91 462.97H549.06V509.57H547.91ZM550.74 470.14H551.89V517.42H550.74ZM553.56 480.67H554.72V524.11H553.56ZM556.39 467.75H557.54V519.62H556.39ZM559.22 472.54H560.37V520.57H559.22ZM562.05 476.36H563.20V519.62H562.05ZM564.88 473.28H566.03V517.97H564.88ZM567.70 457.20H568.86V510.50H567.70ZM570.53 462.27H571.68V513.37H570.53ZM573.36 472.13H574.51V518.92H573.36ZM576.19 460.07H577.34V510.79H576.19ZM579.02 468.49H580.17V517.20H579.02ZM581.84 477.58H583.00V520.65H581.84ZM584.67 480.45H585.82V524.67H584.67ZM587.50 484.57H588.65V530.60H587.50ZM590.33 479.02H591.48V524.47H590.33ZM593.16 487.44H594.31V528.01H593.16ZM595.98 490.98H597.13V528.49H595.98ZM598.81 484.28H599.96V524.86H598.81ZM601.64 482.37H602.79V522.75H601.64ZM604.47 486.20H605.62V525.43H604.47ZM607.30 481.89H608.45V521.60H607.30ZM610.12 483.80H611.28V524.86H610.12ZM612.95 489.07H614.10V528.49H612.95ZM615.78 490.98H616.93V529.93H615.78ZM618.61 486.67H619.76V526.10H618.61ZM621.44 490.50H622.59V528.01H621.44ZM624.26 490.98H625.41V527.54H624.26ZM627.09 488.78H628.24V528.01H627.09ZM629.92 480.17H631.07V523.52H629.92ZM632.75 484.76H633.90V527.06H632.75ZM635.58 483.04H636.73V525.14H635.58ZM638.40 476.34H639.56V520.07H638.40ZM641.23 478.25H642.38V519.69H641.23ZM644.06 474.43H645.21V516.53H644.06ZM646.89 473.47H648.04V517.20H646.89ZM649.72 478.06H650.87V518.92H649.72ZM652.54 482.66H653.69V520.84H652.54ZM655.37 482.66H656.52V520.07H655.37ZM658.20 486.67H659.35V524.47H658.20ZM661.03 490.69H662.18V528.01H661.03ZM663.86 497.97H665.01V533.47H663.86ZM666.68 490.69H667.84V529.93H666.68ZM669.51 486.48H670.66V527.54H669.51ZM672.34 492.22H673.49V528.49H672.34ZM675.17 488.78H676.32V527.34H675.17ZM678.00 487.15H679.15V527.06H678.00ZM680.82 488.78H681.98V525.43H680.82ZM683.65 490.69H684.80V527.54H683.65ZM686.48 490.69H687.63V529.93H686.48ZM689.31 485.91H690.46V525.62H689.31ZM692.14 492.42H693.29V529.45H692.14ZM694.96 487.82H696.12V527.06H694.96ZM697.79 489.74H698.94V528.68H697.79ZM700.62 489.07H701.77V528.49H700.62ZM703.45 490.69H704.60V528.30H703.45ZM706.28 490.31H707.43V529.64H706.28ZM709.10 483.33H710.25V523.90H709.10ZM711.93 493.56H713.08V528.68H711.93ZM714.76 485.53H715.91V524.19H714.76ZM717.59 483.61H718.74V523.71H717.59ZM720.42 483.80H721.57V522.75H720.42ZM723.24 483.80H724.39V521.03H723.24ZM726.07 477.87H727.22V520.84H726.07ZM728.90 469.93H730.05V514.33H728.90ZM731.73 476.15H732.88V519.69H731.73ZM734.56 478.54H735.71V520.07H734.56ZM737.38 478.54H738.54V517.97H737.38ZM740.21 478.06H741.36V518.73H740.21ZM743.04 472.80H744.19V513.18H743.04ZM745.87 468.01H747.02V512.03H745.87ZM748.70 467.54H749.85V511.75H748.70ZM751.52 476.15H752.67V517.01H751.52ZM754.35 473.28H755.50V516.82H754.35ZM757.18 471.84H758.33V515.29H757.18ZM760.01 470.22H761.16V512.42H760.01ZM762.84 474.71H763.99V516.24H762.84ZM765.66 475.67H766.82V518.44H765.66ZM768.49 476.91H769.64V519.69H768.49ZM771.32 476.91H772.47V517.78H771.32ZM774.15 473.28H775.30V514.90H774.15ZM776.98 477.58H778.13V517.78H776.98ZM779.80 474.43H780.95V513.37H779.80ZM782.63 473.47H783.78V513.95H782.63ZM785.46 479.21H786.61V520.65H785.46ZM788.29 476.15H789.44V520.07H788.29ZM791.12 480.74H792.27V520.84H791.12ZM793.94 481.70H795.10V521.79H793.94ZM796.77 481.41H797.92V520.65H796.77ZM799.60 466.77H800.75V507.25H799.60Z" fill="#ff9098"/><path d="M327.80 542.70H328.47V558.01H327.80ZM330.15 541.46H331.30V557.34H330.15ZM332.98 540.12H334.13V556.77H332.98ZM335.81 539.35H336.96V556.10H335.81ZM338.64 542.70H339.79V558.97H338.64ZM341.46 542.03H342.61V557.54H341.46ZM344.29 542.22H345.44V558.01H344.29ZM347.12 544.62H348.27V560.60H347.12ZM349.95 542.70H351.10V558.01H349.95ZM352.78 538.88H353.93V558.01H352.78ZM355.60 541.08H356.75V558.97H355.60ZM358.43 538.21H359.58V555.62H358.43ZM361.26 539.83H362.41V559.93H361.26ZM364.09 533.80H365.24V554.86H364.09ZM366.92 529.02H368.07V554.86H366.92ZM369.75 520.02H370.89V547.97H369.75ZM372.57 520.02H373.72V550.36H372.57ZM375.40 524.81H376.55V555.14H375.40ZM378.23 519.55H379.38V552.75H378.23ZM381.06 520.50H382.21V554.47H381.06ZM383.88 517.44H385.03V551.99H383.88ZM386.71 510.17H387.86V548.44H386.71ZM389.54 511.41H390.69V548.92H389.54ZM392.37 522.89H393.52V552.94H392.37ZM395.20 528.64H396.35V555.43H395.20ZM398.02 529.02H399.17V554.47H398.02ZM400.85 533.13H402.00V558.01H400.85ZM403.68 531.89H404.83V555.14H403.68ZM406.51 533.13H407.66V555.14H406.51ZM409.34 532.18H410.49V554.67H409.34ZM412.16 527.87H413.31V553.23H412.16ZM414.99 536.00H416.14V557.06H414.99ZM417.82 536.29H418.97V557.06H417.82ZM420.65 538.59H421.80V558.30H420.65ZM423.48 536.96H424.63V557.06H423.48ZM426.31 533.80H427.45V553.23H426.31ZM429.13 534.09H430.28V555.43H429.13ZM431.96 536.00H433.11V556.10H431.96ZM434.79 532.66H435.94V553.52H434.79ZM437.62 537.25H438.77V555.62H437.62ZM440.44 533.42H441.59V554.19H440.44ZM443.27 534.57H444.42V555.62H443.27ZM446.10 534.45H447.25V553.78H446.10ZM448.93 533.68H450.08V554.07H448.93ZM451.76 533.01H452.91V555.02H451.76ZM454.58 529.86H455.73V549.76H454.58ZM457.41 527.27H458.56V549.00H457.41ZM460.24 527.27H461.39V549.00H460.24ZM463.07 532.54H464.22V552.15H463.07ZM465.90 535.89H467.05V554.35H465.90ZM468.72 540.19H469.87V555.50H468.72ZM471.55 540.00H472.70V554.74H471.55ZM474.38 542.58H475.53V556.46H474.38ZM477.21 540.96H478.36V556.46H477.21ZM480.04 540.19H481.19V555.02H480.04ZM482.86 541.15H484.01V555.50H482.86ZM485.69 542.11H486.84V557.22H485.69ZM488.52 535.60H489.67V553.59H488.52ZM491.35 537.13H492.50V554.55H491.35ZM494.18 534.26H495.33V554.07H494.18ZM497.00 531.10H498.15V552.63H497.00ZM499.83 529.19H500.98V550.91H499.83ZM502.66 530.14H503.81V549.57H502.66ZM505.49 529.86H506.64V551.48H505.49ZM508.32 528.23H509.47V550.24H508.32ZM511.14 527.94H512.29V550.91H511.14ZM513.97 532.06H515.12V551.87H513.97ZM516.80 528.90H517.95V550.91H516.80ZM519.63 529.86H520.78V552.44H519.63ZM522.46 529.67H523.61V552.15H522.46ZM525.28 528.52H526.43V552.44H525.28ZM528.11 525.07H529.26V551.20H528.11ZM530.94 525.65H532.09V551.87H530.94ZM533.77 529.19H534.92V554.55H533.77ZM536.60 524.69H537.75V551.87H536.60ZM539.42 523.92H540.58V550.24H539.42ZM542.25 527.27H543.40V551.67H542.25ZM545.08 525.07H546.23V550.91H545.08ZM547.91 509.57H549.06V543.83H547.91ZM550.74 517.42H551.89V549.76H550.74ZM553.56 524.11H554.72V555.02H553.56ZM556.39 519.62H557.54V553.40H556.39ZM559.22 520.57H560.37V552.15H559.22ZM562.05 519.62H563.20V551.67H562.05ZM564.88 517.97H566.03V550.98H564.88ZM567.70 510.50H568.86V550.98H567.70ZM570.53 513.37H571.68V553.18H570.53ZM573.36 518.92H574.51V554.81H573.36ZM576.19 510.79H577.34V553.18H576.19ZM579.02 517.20H580.17V553.85H579.02ZM581.84 520.65H583.00V552.22H581.84ZM584.67 524.67H585.82V551.27H584.67ZM587.50 530.60H588.65V555.10H587.50ZM590.33 524.47H591.48V552.70H590.33ZM593.16 528.01H594.31V553.85H593.16ZM595.98 528.49H597.13V553.18H595.98ZM598.81 524.86H599.96V549.74H598.81ZM601.64 522.75H602.79V547.15H601.64ZM604.47 525.43H605.62V550.50H604.47ZM607.30 521.60H608.45V546.67H607.30ZM610.12 524.86H611.28V550.02H610.12ZM612.95 528.49H614.10V551.94H612.95ZM615.78 529.93H616.93V553.18H615.78ZM618.61 526.10H619.76V553.85H618.61ZM621.44 528.01H622.59V552.22H621.44ZM624.26 527.54H625.41V551.46H624.26ZM627.09 528.01H628.24V553.56H627.09ZM629.92 523.52H631.07V550.02H629.92ZM632.75 527.06H633.90V551.65H632.75ZM635.58 525.14H636.73V550.69H635.58ZM638.40 520.07H639.56V548.11H638.40ZM641.23 519.69H642.38V545.72H641.23ZM644.06 516.53H645.21V544.76H644.06ZM646.89 517.20H648.04V546.67H646.89ZM649.72 518.92H650.87V548.40H649.72ZM652.54 520.84H653.69V549.55H652.54ZM655.37 520.07H656.52V549.07H655.37ZM658.20 524.47H659.35V550.31H658.20ZM661.03 528.01H662.18V552.22H661.03ZM663.86 533.47H665.01V554.52H663.86ZM666.68 529.93H667.84V552.89H666.68ZM669.51 527.54H670.66V551.94H669.51ZM672.34 528.49H673.49V552.89H672.34ZM675.17 527.34H676.32V550.69H675.17ZM678.00 527.06H679.15V549.35H678.00ZM680.82 525.43H681.98V546.20H680.82ZM683.65 527.54H684.80V548.11H683.65ZM686.48 529.93H687.63V549.74H686.48ZM689.31 525.62H690.46V549.07H689.31ZM692.14 529.45H693.29V550.02H692.14ZM694.96 527.06H696.12V547.82H694.96ZM697.79 528.68H698.94V550.98H697.79ZM700.62 528.49H701.77V550.69H700.62ZM703.45 528.30H704.60V550.31H703.45ZM706.28 529.64H707.43V551.94H706.28ZM709.10 523.90H710.25V546.67H709.10ZM711.93 528.68H713.08V551.46H711.93ZM714.76 524.19H715.91V547.82H714.76ZM717.59 523.71H718.74V546.87H717.59ZM720.42 522.75H721.57V545.91H720.42ZM723.24 521.03H724.39V543.33H723.24ZM726.07 520.84H727.22V544.00H726.07ZM728.90 514.33H730.05V542.37H728.90ZM731.73 519.69H732.88V544.28H731.73ZM734.56 520.07H735.71V544.28H734.56ZM737.38 517.97H738.54V543.04H737.38ZM740.21 518.73H741.36V542.08H740.21ZM743.04 513.18H744.19V538.25H743.04ZM745.87 512.03H747.02V537.87H745.87ZM748.70 511.75H749.85V539.02H748.70ZM751.52 517.01H752.67V541.12H751.52ZM754.35 516.82H755.50V542.66H754.35ZM757.18 515.29H758.33V541.89H757.18ZM760.01 512.42H761.16V538.25H760.01ZM762.84 516.24H763.99V541.41H762.84ZM765.66 518.44H766.82V543.04H765.66ZM768.49 519.69H769.64V543.80H768.49ZM771.32 517.78H772.47V541.12H771.32ZM774.15 514.90H775.30V540.17H774.15ZM776.98 517.78H778.13V542.85H776.98ZM779.80 513.37H780.95V539.50H779.80ZM782.63 513.95H783.78V541.89H782.63ZM785.46 520.65H786.61V544.76H785.46ZM788.29 520.07H789.44V543.33H788.29ZM791.12 520.84H792.27V544.28H791.12ZM793.94 521.79H795.10V545.72H793.94ZM796.77 520.65H797.92V544.00H796.77ZM799.60 507.25H800.75V536.15H799.60Z" fill="#f05f87"/><path d="M327.80 558.01H328.47V576.20H327.80ZM330.15 557.34H331.30V576.20H330.15ZM332.98 556.77H334.13V576.20H332.98ZM335.81 556.10H336.96V576.20H335.81ZM338.64 558.97H339.79V577.15H338.64ZM341.46 557.54H342.61V576.67H341.46ZM344.29 558.01H345.44V578.11H344.29ZM347.12 560.60H348.27V579.07H347.12ZM349.95 558.01H351.10V577.44H349.95ZM352.78 558.01H353.93V577.15H352.78ZM355.60 558.97H356.75V578.11H355.60ZM358.43 555.62H359.58V577.15H358.43ZM361.26 559.93H362.41V579.07H361.26ZM364.09 554.86H365.24V576.67H364.09ZM366.92 554.86H368.07V576.67H366.92ZM369.75 547.97H370.89V572.85H369.75ZM372.57 550.36H373.72V574.76H372.57ZM375.40 555.14H376.55V578.11H375.40ZM378.23 552.75H379.38V577.15H378.23ZM381.06 554.47H382.21V577.44H381.06ZM383.88 551.99H385.03V575.72H383.88ZM386.71 548.44H387.86V574.76H386.71ZM389.54 548.92H390.69V575.24H389.54ZM392.37 552.94H393.52V577.15H392.37ZM395.20 555.43H396.35V576.67H395.20ZM398.02 554.47H399.17V576.20H398.02ZM400.85 558.01H402.00V577.15H400.85ZM403.68 555.14H404.83V575.24H403.68ZM406.51 555.14H407.66V575.72H406.51ZM409.34 554.67H410.49V575.72H409.34ZM412.16 553.23H413.31V574.76H412.16ZM414.99 557.06H416.14V577.15H414.99ZM417.82 557.06H418.97V576.48H417.82ZM420.65 558.30H421.80V576.20H420.65ZM423.48 557.06H424.63V575.72H423.48ZM426.31 553.23H427.45V575.24H426.31ZM429.13 555.43H430.28V575.72H429.13ZM431.96 556.10H433.11V576.20H431.96ZM434.79 553.52H435.94V574.00H434.79ZM437.62 555.62H438.77V575.24H437.62ZM440.44 554.19H441.59V574.57H440.44ZM443.27 555.62H444.42V574.76H443.27ZM446.10 553.78H447.25V573.28H446.10ZM448.93 554.07H450.08V574.04H448.93ZM451.76 555.02H452.91V575.96H451.76ZM454.58 549.76H455.73V572.80H454.58ZM457.41 549.00H458.56V574.04H457.41ZM460.24 549.00H461.39V574.04H460.24ZM463.07 552.15H464.22V575.96H463.07ZM465.90 554.35H467.05V575.67H465.90ZM468.72 555.50H469.87V575.19H468.72ZM471.55 554.74H472.70V576.91H471.55ZM474.38 556.46H475.53V576.15H474.38ZM477.21 556.46H478.36V576.91H477.21ZM480.04 555.02H481.19V575.67H480.04ZM482.86 555.50H484.01V576.15H482.86ZM485.69 557.22H486.84V577.11H485.69ZM488.52 553.59H489.67V575.38H488.52ZM491.35 554.55H492.50V577.58H491.35ZM494.18 554.07H495.33V577.11H494.18ZM497.00 552.63H498.15V577.30H497.00ZM499.83 550.91H500.98V575.38H499.83ZM502.66 549.57H503.81V576.15H502.66ZM505.49 551.48H506.64V576.34H505.49ZM508.32 550.24H509.47V576.34H508.32ZM511.14 550.91H512.29V578.06H511.14ZM513.97 551.87H515.12V576.91H513.97ZM516.80 550.91H517.95V576.15H516.80ZM519.63 552.44H520.78V576.63H519.63ZM522.46 552.15H523.61V576.91H522.46ZM525.28 552.44H526.43V576.34H525.28ZM528.11 551.20H529.26V577.11H528.11ZM530.94 551.87H532.09V577.58H530.94ZM533.77 554.55H534.92V577.11H533.77ZM536.60 551.87H537.75V578.06H536.60ZM539.42 550.24H540.58V577.58H539.42ZM542.25 551.67H543.40V576.34H542.25ZM545.08 550.91H546.23V576.91H545.08ZM547.91 543.83H549.06V576.15H547.91ZM550.74 549.76H551.89V576.91H550.74ZM553.56 555.02H554.72V579.78H553.56ZM556.39 553.40H557.54V578.06H556.39ZM559.22 552.15H560.37V577.11H559.22ZM562.05 551.67H563.20V576.91H562.05ZM564.88 550.98H566.03V577.11H564.88ZM567.70 550.98H568.86V577.11H567.70ZM570.53 553.18H571.68V577.58H570.53ZM573.36 554.81H574.51V578.06H573.36ZM576.19 553.18H577.34V577.58H576.19ZM579.02 553.85H580.17V575.38H579.02ZM581.84 552.22H583.00V576.91H581.84ZM584.67 551.27H585.82V577.11H584.67ZM587.50 555.10H588.65V577.58H587.50ZM590.33 552.70H591.48V575.00H590.33ZM593.16 553.85H594.31V576.63H593.16ZM595.98 553.18H597.13V575.67H595.98ZM598.81 549.74H599.96V575.19H598.81ZM601.64 547.15H602.79V573.28H601.64ZM604.47 550.50H605.62V574.43H604.47ZM607.30 546.67H608.45V573.47H607.30ZM610.12 550.02H611.28V574.43H610.12ZM612.95 551.94H614.10V575.19H612.95ZM615.78 553.18H616.93V575.67H615.78ZM618.61 553.85H619.76V576.91H618.61ZM621.44 552.22H622.59V576.15H621.44ZM624.26 551.46H625.41V575.38H624.26ZM627.09 553.56H628.24V576.34H627.09ZM629.92 550.02H631.07V575.19H629.92ZM632.75 551.65H633.90V576.15H632.75ZM635.58 550.69H636.73V575.19H635.58ZM638.40 548.11H639.56V575.00H638.40ZM641.23 545.72H642.38V573.76H641.23ZM644.06 544.76H645.21V573.28H644.06ZM646.89 546.67H648.04V573.76H646.89ZM649.72 548.40H650.87V575.00H649.72ZM652.54 549.55H653.69V575.96H652.54ZM655.37 549.07H656.52V575.96H655.37ZM658.20 550.31H659.35V575.96H658.20ZM661.03 552.22H662.18V576.34H661.03ZM663.86 554.52H665.01V577.11H663.86ZM666.68 552.89H667.84V576.91H666.68ZM669.51 551.94H670.66V576.15H669.51ZM672.34 552.89H673.49V576.34H672.34ZM675.17 550.69H676.32V575.38H675.17ZM678.00 549.35H679.15V574.23H678.00ZM680.82 546.20H681.98V572.32H680.82ZM683.65 548.11H684.80V573.28H683.65ZM686.48 549.74H687.63V574.71H686.48ZM689.31 549.07H690.46V575.00H689.31ZM692.14 550.02H693.29V575.96H692.14ZM694.96 547.82H696.12V574.71H694.96ZM697.79 550.98H698.94V575.00H697.79ZM700.62 550.69H701.77V574.43H700.62ZM703.45 550.31H704.60V574.43H703.45ZM706.28 551.94H707.43V575.19H706.28ZM709.10 546.67H710.25V573.09H709.10ZM711.93 551.46H713.08V575.00H711.93ZM714.76 547.82H715.91V573.09H714.76ZM717.59 546.87H718.74V572.13H717.59ZM720.42 545.91H721.57V571.84H720.42ZM723.24 543.33H724.39V571.17H723.24ZM726.07 544.00H727.22V571.84H726.07ZM728.90 542.37H730.05V571.56H728.90ZM731.73 544.28H732.88V571.84H731.73ZM734.56 544.28H735.71V571.84H734.56ZM737.38 543.04H738.54V570.60H737.38ZM740.21 542.08H741.36V570.60H740.21ZM743.04 538.25H744.19V567.73H743.04ZM745.87 537.87H747.02V569.45H745.87ZM748.70 539.02H749.85V571.56H748.70ZM751.52 541.12H752.67V571.84H751.52ZM754.35 542.66H755.50V572.80H754.35ZM757.18 541.89H758.33V571.84H757.18ZM760.01 538.25H761.16V570.60H760.01ZM762.84 541.41H763.99V570.41H762.84ZM765.66 543.04H766.82V570.60H765.66ZM768.49 543.80H769.64V571.84H768.49ZM771.32 541.12H772.47V569.45H771.32ZM774.15 540.17H775.30V571.36H774.15ZM776.98 542.85H778.13V571.84H776.98ZM779.80 539.50H780.95V570.60H779.80ZM782.63 541.89H783.78V571.84H782.63ZM785.46 544.76H786.61V571.56H785.46ZM788.29 543.33H789.44V572.13H788.29ZM791.12 544.28H792.27V572.32H791.12ZM793.94 545.72H795.10V573.47H793.94ZM796.77 544.00H797.92V572.32H796.77ZM799.60 536.15H800.75V572.13H799.60Z" fill="#5c7dcd"/><path d="M327.80 576.20H328.47V597.50H327.80ZM330.15 576.20H331.30V597.50H330.15ZM332.98 576.20H334.13V597.50H332.98ZM335.81 576.20H336.96V597.50H335.81ZM338.64 577.15H339.79V597.50H338.64ZM341.46 576.67H342.61V597.50H341.46ZM344.29 578.11H345.44V597.50H344.29ZM347.12 579.07H348.27V597.50H347.12ZM349.95 577.44H351.10V597.50H349.95ZM352.78 577.15H353.93V597.50H352.78ZM355.60 578.11H356.75V597.50H355.60ZM358.43 577.15H359.58V597.50H358.43ZM361.26 579.07H362.41V597.50H361.26ZM364.09 576.67H365.24V597.50H364.09ZM366.92 576.67H368.07V597.50H366.92ZM369.75 572.85H370.89V597.50H369.75ZM372.57 574.76H373.72V597.50H372.57ZM375.40 578.11H376.55V597.50H375.40ZM378.23 577.15H379.38V597.50H378.23ZM381.06 577.44H382.21V597.50H381.06ZM383.88 575.72H385.03V597.50H383.88ZM386.71 574.76H387.86V597.50H386.71ZM389.54 575.24H390.69V597.50H389.54ZM392.37 577.15H393.52V597.50H392.37ZM395.20 576.67H396.35V597.50H395.20ZM398.02 576.20H399.17V597.50H398.02ZM400.85 577.15H402.00V597.50H400.85ZM403.68 575.24H404.83V597.50H403.68ZM406.51 575.72H407.66V597.50H406.51ZM409.34 575.72H410.49V597.50H409.34ZM412.16 574.76H413.31V597.50H412.16ZM414.99 577.15H416.14V597.50H414.99ZM417.82 576.48H418.97V597.50H417.82ZM420.65 576.20H421.80V597.50H420.65ZM423.48 575.72H424.63V597.50H423.48ZM426.31 575.24H427.45V597.50H426.31ZM429.13 575.72H430.28V597.50H429.13ZM431.96 576.20H433.11V597.50H431.96ZM434.79 574.00H435.94V597.50H434.79ZM437.62 575.24H438.77V597.50H437.62ZM440.44 574.57H441.59V597.50H440.44ZM443.27 574.76H444.42V597.50H443.27ZM446.10 573.28H447.25V597.50H446.10ZM448.93 574.04H450.08V597.50H448.93ZM451.76 575.96H452.91V597.50H451.76ZM454.58 572.80H455.73V597.50H454.58ZM457.41 574.04H458.56V597.50H457.41ZM460.24 574.04H461.39V597.50H460.24ZM463.07 575.96H464.22V597.50H463.07ZM465.90 575.67H467.05V597.50H465.90ZM468.72 575.19H469.87V597.50H468.72ZM471.55 576.91H472.70V597.50H471.55ZM474.38 576.15H475.53V597.50H474.38ZM477.21 576.91H478.36V597.50H477.21ZM480.04 575.67H481.19V597.50H480.04ZM482.86 576.15H484.01V597.50H482.86ZM485.69 577.11H486.84V597.50H485.69ZM488.52 575.38H489.67V597.50H488.52ZM491.35 577.58H492.50V597.50H491.35ZM494.18 577.11H495.33V597.50H494.18ZM497.00 577.30H498.15V597.50H497.00ZM499.83 575.38H500.98V597.50H499.83ZM502.66 576.15H503.81V597.50H502.66ZM505.49 576.34H506.64V597.50H505.49ZM508.32 576.34H509.47V597.50H508.32ZM511.14 578.06H512.29V597.50H511.14ZM513.97 576.91H515.12V597.50H513.97ZM516.80 576.15H517.95V597.50H516.80ZM519.63 576.63H520.78V597.50H519.63ZM522.46 576.91H523.61V597.50H522.46ZM525.28 576.34H526.43V597.50H525.28ZM528.11 577.11H529.26V597.50H528.11ZM530.94 577.58H532.09V597.50H530.94ZM533.77 577.11H534.92V597.50H533.77ZM536.60 578.06H537.75V597.50H536.60ZM539.42 577.58H540.58V597.50H539.42ZM542.25 576.34H543.40V597.50H542.25ZM545.08 576.91H546.23V597.50H545.08ZM547.91 576.15H549.06V597.50H547.91ZM550.74 576.91H551.89V597.50H550.74ZM553.56 579.78H554.72V597.50H553.56ZM556.39 578.06H557.54V597.50H556.39ZM559.22 577.11H560.37V597.50H559.22ZM562.05 576.91H563.20V597.50H562.05ZM564.88 577.11H566.03V597.50H564.88ZM567.70 577.11H568.86V597.50H567.70ZM570.53 577.58H571.68V597.50H570.53ZM573.36 578.06H574.51V597.50H573.36ZM576.19 577.58H577.34V597.50H576.19ZM579.02 575.38H580.17V597.50H579.02ZM581.84 576.91H583.00V597.50H581.84ZM584.67 577.11H585.82V597.50H584.67ZM587.50 577.58H588.65V597.50H587.50ZM590.33 575.00H591.48V597.50H590.33ZM593.16 576.63H594.31V597.50H593.16ZM595.98 575.67H597.13V597.50H595.98ZM598.81 575.19H599.96V597.50H598.81ZM601.64 573.28H602.79V597.50H601.64ZM604.47 574.43H605.62V597.50H604.47ZM607.30 573.47H608.45V597.50H607.30ZM610.12 574.43H611.28V597.50H610.12ZM612.95 575.19H614.10V597.50H612.95ZM615.78 575.67H616.93V597.50H615.78ZM618.61 576.91H619.76V597.50H618.61ZM621.44 576.15H622.59V597.50H621.44ZM624.26 575.38H625.41V597.50H624.26ZM627.09 576.34H628.24V597.50H627.09ZM629.92 575.19H631.07V597.50H629.92ZM632.75 576.15H633.90V597.50H632.75ZM635.58 575.19H636.73V597.50H635.58ZM638.40 575.00H639.56V597.50H638.40ZM641.23 573.76H642.38V597.50H641.23ZM644.06 573.28H645.21V597.50H644.06ZM646.89 573.76H648.04V597.50H646.89ZM649.72 575.00H650.87V597.50H649.72ZM652.54 575.96H653.69V597.50H652.54ZM655.37 575.96H656.52V597.50H655.37ZM658.20 575.96H659.35V597.50H658.20ZM661.03 576.34H662.18V597.50H661.03ZM663.86 577.11H665.01V597.50H663.86ZM666.68 576.91H667.84V597.50H666.68ZM669.51 576.15H670.66V597.50H669.51ZM672.34 576.34H673.49V597.50H672.34ZM675.17 575.38H676.32V597.50H675.17ZM678.00 574.23H679.15V597.50H678.00ZM680.82 572.32H681.98V597.50H680.82ZM683.65 573.28H684.80V597.50H683.65ZM686.48 574.71H687.63V597.50H686.48ZM689.31 575.00H690.46V597.50H689.31ZM692.14 575.96H693.29V597.50H692.14ZM694.96 574.71H696.12V597.50H694.96ZM697.79 575.00H698.94V597.50H697.79ZM700.62 574.43H701.77V597.50H700.62ZM703.45 574.43H704.60V597.50H703.45ZM706.28 575.19H707.43V597.50H706.28ZM709.10 573.09H710.25V597.50H709.10ZM711.93 575.00H713.08V597.50H711.93ZM714.76 573.09H715.91V597.50H714.76ZM717.59 572.13H718.74V597.50H717.59ZM720.42 571.84H721.57V597.50H720.42ZM723.24 571.17H724.39V597.50H723.24ZM726.07 571.84H727.22V597.50H726.07ZM728.90 571.56H730.05V597.50H728.90ZM731.73 571.84H732.88V597.50H731.73ZM734.56 571.84H735.71V597.50H734.56ZM737.38 570.60H738.54V597.50H737.38ZM740.21 570.60H741.36V597.50H740.21ZM743.04 567.73H744.19V597.50H743.04ZM745.87 569.45H747.02V597.50H745.87ZM748.70 571.56H749.85V597.50H748.70ZM751.52 571.84H752.67V597.50H751.52ZM754.35 572.80H755.50V597.50H754.35ZM757.18 571.84H758.33V597.50H757.18ZM760.01 570.60H761.16V597.50H760.01ZM762.84 570.41H763.99V597.50H762.84ZM765.66 570.60H766.82V597.50H765.66ZM768.49 571.84H769.64V597.50H768.49ZM771.32 569.45H772.47V597.50H771.32ZM774.15 571.36H775.30V597.50H774.15ZM776.98 571.84H778.13V597.50H776.98ZM779.80 570.60H780.95V597.50H779.80ZM782.63 571.84H783.78V597.50H782.63ZM785.46 571.56H786.61V597.50H785.46ZM788.29 572.13H789.44V597.50H788.29ZM791.12 572.32H792.27V597.50H791.12ZM793.94 573.47H795.10V597.50H793.94ZM796.77 572.32H797.92V597.50H796.77ZM799.60 572.13H800.75V597.50H799.60Z" fill="#4864a5"/></g>
</svg>
<div class="t ax" style="left:367.2px;top:604.6px;transform:translateX(-50%)">Oct 22</div>
<div class="t ax" style="left:452.0px;top:604.6px;transform:translateX(-50%)">Nov 22</div>
<div class="t ax" style="left:536.9px;top:604.6px;transform:translateX(-50%)">Dec 22</div>
<div class="t ax" style="left:621.7px;top:604.6px;transform:translateX(-50%)">Jan 23</div>
<div class="t ax" style="left:706.6px;top:604.6px;transform:translateX(-50%)">Feb 23</div>
<div class="t ax" style="left:791.4px;top:604.6px;transform:translateX(-50%)">Mar 23</div>

<svg style="left:471px;top:313px" width="17" height="17" viewBox="471 313 17 17"><circle cx="479.6" cy="321.2" r="6.5" fill="none" stroke="#fff" stroke-width="1.5"/><rect x="478.7" y="320.2" width="1.9" height="4.6" fill="#fff"/><rect x="477.8" y="320.2" width="2" height="1.2" fill="#fff"/><rect x="477.6" y="323.8" width="4.1" height="1.1" fill="#fff"/><circle cx="479.6" cy="317.9" r="1.15" fill="#fff"/></svg>
<svg style="left:779px;top:333px" width="17" height="19" viewBox="779 333 17 19"><path d="M787.4 334.6V347.6M781.9 342.5L787.4 348.1L792.9 342.5M780.6 350.3H794.3" fill="none" stroke="#5c5e61" stroke-width="1.5" stroke-linecap="round" stroke-linejoin="round"/></svg>
<div class="abs" style="left:465px;top:641px;width:6px;height:1px;background:#2a8a48"></div>
<!--LEGSTART-->
<div class="abs" style="left:827.4px;top:372.7px;width:16.4px;height:16.3px;border-radius:3.6px;background:#f1aa3e"></div>
<svg style="left:827.4px;top:372.7px" width="16.4" height="16.3" viewBox="0 0 16.4 16.3"><path d="M4.4 8.3L7.3 11.4L13.2 5.1" fill="none" stroke="#fff" stroke-width="2" stroke-linecap="round" stroke-linejoin="round"/></svg>
<div class="t ln" style="top:373.0px;letter-spacing:0.06px">Highest Rank</div>
<div class="t ls" style="top:391.8px;letter-spacing:0.12px">Position 1</div>
<div class="t lp" style="top:373.2px"><svg style="position:static;vertical-align:-0.6px;margin-right:0.8px" width="8.4" height="9.6" viewBox="0 0 8.4 9.6"><path d="M4.2 9.4V0.9M0.6 4.3L4.2 0.7L7.8 4.3" fill="none" stroke="#2fb457" stroke-width="1.15"/></svg>59%</div>
<div class="t lp inc" style="top:388.1px">increase</div>
<div class="abs" style="left:827.4px;top:417.0px;width:16.4px;height:16.3px;border-radius:3.6px;background:#de7a33"></div>
<svg style="left:827.4px;top:417.0px" width="16.4" height="16.3" viewBox="0 0 16.4 16.3"><path d="M4.4 8.3L7.3 11.4L13.2 5.1" fill="none" stroke="#fff" stroke-width="2" stroke-linecap="round" stroke-linejoin="round"/></svg>
<div class="t ln" style="top:417.3px;letter-spacing:0.38px">Hyper Traffic</div>
<div class="t ls" style="top:436.1px;letter-spacing:0.34px">Position 2 - 3</div>
<div class="t lp" style="top:417.5px"><svg style="position:static;vertical-align:-0.6px;margin-right:0.8px" width="8.4" height="9.6" viewBox="0 0 8.4 9.6"><path d="M4.2 9.4V0.9M0.6 4.3L4.2 0.7L7.8 4.3" fill="none" stroke="#2fb457" stroke-width="1.15"/></svg>22%</div>
<div class="t lp inc" style="top:432.4px">increase</div>
<div class="abs" style="left:827.4px;top:461.3px;width:16.4px;height:16.3px;border-radius:3.6px;background:#f28b8e"></div>
<svg style="left:827.4px;top:461.3px" width="16.4" height="16.3" viewBox="0 0 16.4 16.3"><path d="M4.4 8.3L7.3 11.4L13.2 5.1" fill="none" stroke="#fff" stroke-width="2" stroke-linecap="round" stroke-linejoin="round"/></svg>
<div class="t ln" style="top:461.6px;letter-spacing:0.49px">Traffic</div>
<div class="t ls" style="top:480.4px;letter-spacing:0.36px">Position 4 - 10</div>
<div class="t lp" style="top:461.8px"><svg style="position:static;vertical-align:-0.6px;margin-right:0.8px" width="8.4" height="9.6" viewBox="0 0 8.4 9.6"><path d="M4.2 9.4V0.9M0.6 4.3L4.2 0.7L7.8 4.3" fill="none" stroke="#2fb457" stroke-width="1.15"/></svg>67%</div>
<div class="t lp inc" style="top:476.7px">increase</div>
<div class="abs" style="left:827.4px;top:505.6px;width:16.4px;height:16.3px;border-radius:3.6px;background:#e9577e"></div>
<svg style="left:827.4px;top:505.6px" width="16.4" height="16.3" viewBox="0 0 16.4 16.3"><path d="M4.4 8.3L7.3 11.4L13.2 5.1" fill="none" stroke="#fff" stroke-width="2" stroke-linecap="round" stroke-linejoin="round"/></svg>
<div class="t ln" style="top:505.9px;letter-spacing:0.24px">Striking Distance</div>
<div class="t ls" style="top:524.7px;letter-spacing:0.34px">Position 11 - 20 (Page 2)</div>
<div class="t lp" style="top:506.1px"><svg style="position:static;vertical-align:-0.6px;margin-right:0.8px" width="8.4" height="9.6" viewBox="0 0 8.4 9.6"><path d="M4.2 9.4V0.9M0.6 4.3L4.2 0.7L7.8 4.3" fill="none" stroke="#2fb457" stroke-width="1.15"/></svg>193%</div>
<div class="t lp inc" style="top:521.0px">increase</div>
<div class="abs" style="left:827.4px;top:549.9px;width:16.4px;height:16.3px;border-radius:3.6px;background:#5a78c8"></div>
<svg style="left:827.4px;top:549.9px" width="16.4" height="16.3" viewBox="0 0 16.4 16.3"><path d="M4.4 8.3L7.3 11.4L13.2 5.1" fill="none" stroke="#fff" stroke-width="2" stroke-linecap="round" stroke-linejoin="round"/></svg>
<div class="t ln" style="top:550.2px;letter-spacing:0.21px">Developmental</div>
<div class="t ls" style="top:569.0px;letter-spacing:0.36px">Position 21 - 50 (Page 3 - 5)</div>
<div class="t lp" style="top:550.4px"><svg style="position:static;vertical-align:-0.6px;margin-right:0.8px" width="8.4" height="9.6" viewBox="0 0 8.4 9.6"><path d="M4.2 9.4V0.9M0.6 4.3L4.2 0.7L7.8 4.3" fill="none" stroke="#2fb457" stroke-width="1.15"/></svg>94%</div>
<div class="t lp inc" style="top:565.3px">increase</div>
<div class="abs" style="left:827.4px;top:594.2px;width:16.4px;height:16.3px;border-radius:3.6px;background:#4862ab"></div>
<svg style="left:827.4px;top:594.2px" width="16.4" height="16.3" viewBox="0 0 16.4 16.3"><path d="M4.4 8.3L7.3 11.4L13.2 5.1" fill="none" stroke="#fff" stroke-width="2" stroke-linecap="round" stroke-linejoin="round"/></svg>
<div class="t ln" style="top:594.5px;letter-spacing:0.36px">Deep Traffic</div>
<div class="t ls" style="top:613.3px;letter-spacing:0.39px">Position 51 - 100 (Page 6 - 10)</div>
<div class="t lp" style="top:594.7px"><svg style="position:static;vertical-align:-0.6px;margin-right:0.8px" width="8.4" height="9.6" viewBox="0 0 8.4 9.6"><path d="M4.2 9.4V0.9M0.6 4.3L4.2 0.7L7.8 4.3" fill="none" stroke="#2fb457" stroke-width="1.15"/></svg>13%</div>
<div class="t lp inc" style="top:609.6px">increase</div>
<!--LEGEND_END-->
</body>
</html>
